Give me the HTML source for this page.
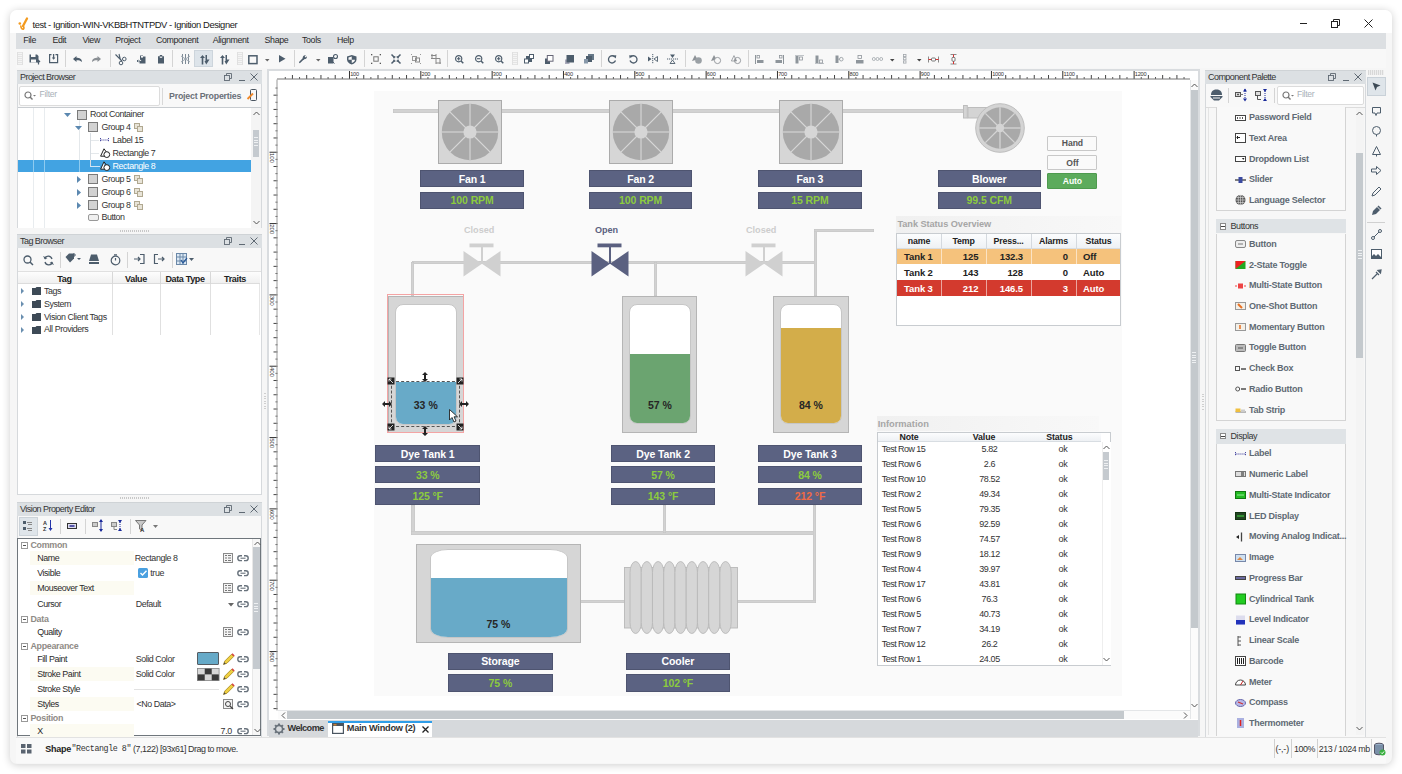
<!DOCTYPE html><html><head><meta charset="utf-8"><style>
*{margin:0;padding:0;box-sizing:border-box}
html,body{width:1402px;height:774px;overflow:hidden;background:#fff;font-family:"Liberation Sans",sans-serif;color:#222}
.a{position:absolute}
.t{position:absolute;white-space:nowrap;line-height:1}
svg{position:absolute;overflow:visible}
#win{position:absolute;left:10px;top:10px;width:1382px;height:754px;border-radius:7px;background:#f6f6f6;box-shadow:0 1px 8px rgba(0,0,0,0.20)}
</style></head><body>
<div id="win"></div>
<div class="a" style="left:10px;top:10px;width:1382px;height:23px;background:#fff;border-radius:7px 7px 0 0"></div>
<svg style="left:17px;top:16px" width="14" height="16" viewBox="0 0 14 16"><path d="M10 2.5 L6 10" stroke="#f39a1e" stroke-width="2.3" stroke-linecap="round"/><circle cx="2.8" cy="7.5" r="1.3" fill="#f39a1e"/><path d="M3.8 10 Q4.2 13.4 6.3 13.3 Q7.6 12 6.2 10" stroke="#f39a1e" stroke-width="1.6" fill="none" stroke-linecap="round"/></svg>
<div class="t" style="left:32.5px;top:19.71px;font-size:9.4px;letter-spacing:-0.42px;color:#1a1a1a">test - Ignition-WIN-VKBBHTNTPDV - Ignition Designer</div>
<div class="a" style="left:1300px;top:23px;width:7px;height:1px;background:#222"></div>
<svg style="left:1331px;top:19px" width="9" height="9" viewBox="0 0 9 9"><rect x="0.5" y="2.5" width="6" height="6" fill="none" stroke="#222"/><path d="M2.5 2.5 V0.5 H8.5 V6.5 H6.5" fill="none" stroke="#222"/></svg>
<svg style="left:1364px;top:19px" width="9" height="9" viewBox="0 0 9 9"><path d="M0.5 0.5 L8.5 8.5 M8.5 0.5 L0.5 8.5" stroke="#222" stroke-width="1"/></svg>
<div class="a" style="left:16px;top:33px;width:1370px;height:16px;background:#dcdfe2"></div>
<div class="t" style="left:23.2px;top:36.42px;font-size:8.8px;letter-spacing:-0.35px;color:#2a2a2a">File</div>
<div class="t" style="left:52.4px;top:36.42px;font-size:8.8px;letter-spacing:-0.35px;color:#2a2a2a">Edit</div>
<div class="t" style="left:82.4px;top:36.42px;font-size:8.8px;letter-spacing:-0.35px;color:#2a2a2a">View</div>
<div class="t" style="left:115.3px;top:36.42px;font-size:8.8px;letter-spacing:-0.35px;color:#2a2a2a">Project</div>
<div class="t" style="left:156px;top:36.42px;font-size:8.8px;letter-spacing:-0.35px;color:#2a2a2a">Component</div>
<div class="t" style="left:212.7px;top:36.42px;font-size:8.8px;letter-spacing:-0.35px;color:#2a2a2a">Alignment</div>
<div class="t" style="left:264.6px;top:36.42px;font-size:8.8px;letter-spacing:-0.35px;color:#2a2a2a">Shape</div>
<div class="t" style="left:302px;top:36.42px;font-size:8.8px;letter-spacing:-0.35px;color:#2a2a2a">Tools</div>
<div class="t" style="left:337px;top:36.42px;font-size:8.8px;letter-spacing:-0.35px;color:#2a2a2a">Help</div>
<div class="a" style="left:16px;top:49px;width:1370px;height:19px;background:#f8f8f8"></div>
<div class="a" style="left:17px;top:52px;width:6px;height:13px;background:repeating-linear-gradient(#e4e4e4 0 1px,#f4f4f4 1px 2px);border-left:1px solid #e0e0e0;border-right:1px solid #e0e0e0"></div>
<svg style="left:29px;top:54px" width="12" height="11" viewBox="0 0 12 11"><path d="M0.5 0.5 H2 V3 H6.5 V0.5 H8 L9.5 2 V8.5 H0.5 Z" fill="#4d5d6c"/><rect x="2" y="5.5" width="5" height="3" fill="#f8f8f8"/><path d="M9.5 10.5 V6.5 M8 8 L9.5 6.3 L11 8" stroke="#4d5d6c" stroke-width="1.2" fill="none"/></svg>
<svg style="left:49px;top:54px" width="10" height="10" viewBox="0 0 10 10"><path d="M2.5 0.6 H0.6 V8.6 H8.6 V0.6 H6.5" fill="none" stroke="#4d5d6c" stroke-width="1.2"/><path d="M4.6 0 V4.5" stroke="#4d5d6c" stroke-width="1.3"/><path d="M2.8 3.5 H6.4 L4.6 5.8 Z" fill="#4d5d6c"/></svg>
<div class="a" style="left:65.4px;top:50px;width:1px;height:17px;background:#d4d4d4"></div>
<svg style="left:72.6px;top:55.5px" width="10" height="7" viewBox="0 0 10 7"><path d="M0 3 L3.5 0 V1.8 C6.5 1.8 9 3 9 6 C7.5 4.5 6 4.2 3.5 4.2 V6 Z" fill="#4d5d6c"/></svg>
<svg style="left:92.2px;top:55.5px" width="10" height="7" viewBox="0 0 10 7"><path d="M9 3 L5.5 0 V1.8 C2.5 1.8 0 3 0 6 C1.5 4.5 3 4.2 5.5 4.2 V6 Z" fill="#8a8f94"/></svg>
<div class="a" style="left:109.5px;top:50px;width:1px;height:17px;background:#d4d4d4"></div>
<svg style="left:115px;top:53.5px" width="12" height="11" viewBox="0 0 12 11"><path d="M0.5 0.5 L7 7 M4 0 L5.5 6" stroke="#4d5d6c" stroke-width="1.1"/><circle cx="9.3" cy="5" r="1.8" fill="none" stroke="#4d5d6c"/><circle cx="6" cy="9" r="1.8" fill="none" stroke="#4d5d6c"/></svg>
<svg style="left:136.5px;top:54.5px" width="9" height="9" viewBox="0 0 9 9"><path d="M3 0.5 H6 V1.5 H8.5 V8.5 H2.5 V6 H4.5 L3 4.5 Z" fill="#4d5d6c"/><path d="M0 6 H3 M1.2 4.8 L0 6 L1.2 7.2" stroke="#4d5d6c" fill="none" stroke-width="0.9"/><rect x="4" y="1" width="2" height="1.6" fill="#f8f8f8"/></svg>
<svg style="left:158px;top:54.5px" width="6" height="8.5" viewBox="0 0 6 8.5"><path d="M0 1.2 H1.8 V0 H4.2 V1.2 H6 V8.5 H0 Z" fill="#4d5d6c"/><rect x="1.8" y="1.6" width="2.4" height="1.2" fill="#f8f8f8"/></svg>
<div class="a" style="left:172.4px;top:50px;width:1px;height:17px;background:#d4d4d4"></div>
<svg style="left:180.5px;top:54px" width="9" height="10" viewBox="0 0 9 10"><path d="M1.5 0 V10 M4.5 0 V10 M7.5 0 V10" stroke="#7d8a96" stroke-width="1"/><path d="M0 2 L9 8 M0 8 L9 2" stroke="#a0aab3" stroke-width="1"/></svg>
<div class="a" style="left:194.2px;top:49.5px;width:19.3px;height:17.5px;background:#dde4ea;border:1px solid #cdd5dc"></div>
<svg style="left:199.8px;top:54.5px" width="9.5" height="9.5" viewBox="0 0 9.5 9.5"><path d="M0 3 L2.5 0 L5 3 H3.3 V9.5 H1.7 V3 Z" fill="#4d5d6c"/><path d="M5.5 0 H7 V4.5 L9.5 4.5 L6.25 9.5 L4.5 6 H5.5 Z" fill="#4d5d6c"/></svg>
<svg style="left:219.8px;top:54.5px" width="9.5" height="9.5" viewBox="0 0 9.5 9.5"><path d="M0 3 L2.5 0 L5 3 H3.3 V9.5 H1.7 V3 Z" fill="#4d5d6c"/><path d="M5.5 0 H7 V4.5 L9.5 4.5 L6.25 9.5 L4.5 6 H5.5 Z" fill="#4d5d6c"/></svg>
<div class="a" style="left:237.4px;top:52px;width:6px;height:13px;background:repeating-linear-gradient(#e4e4e4 0 1px,#f4f4f4 1px 2px);border-left:1px solid #e0e0e0;border-right:1px solid #e0e0e0"></div>
<svg style="left:247.5px;top:54.5px" width="10" height="9.5" viewBox="0 0 10 9.5"><rect x="0.8" y="0.8" width="8.2" height="7.8" fill="none" stroke="#4d5d6c" stroke-width="1.5"/></svg>
<svg style="left:265px;top:58.5px" width="4.5" height="2.5" viewBox="0 0 4.5 2.5"><path d="M0 0 H4.5 L2.25 2.5 Z" fill="#666"/></svg>
<svg style="left:278.75px;top:55.3px" width="6.5" height="7.4" viewBox="0 0 6.5 7.4"><path d="M0 0 L6.5 3.7 L0 7.4 Z" fill="#4d5d6c"/></svg>
<div class="a" style="left:293.8px;top:50px;width:1px;height:17px;background:#d4d4d4"></div>
<svg style="left:299px;top:55px" width="8.5" height="8" viewBox="0 0 8.5 8"><path d="M0.8 7.3 L4.5 3.6" stroke="#4d5d6c" stroke-width="1.6" stroke-linecap="round"/><path d="M3.8 3.6 C3.3 1.5 4.8 0 6.8 0.4 L5.7 1.6 L6.5 2.4 L7.8 1.3 C8.3 3.3 6.6 4.6 4.6 4.2 Z" fill="#4d5d6c"/></svg>
<svg style="left:315.8px;top:58.5px" width="4.5" height="2.5" viewBox="0 0 4.5 2.5"><path d="M0 0 H4.5 L2.25 2.5 Z" fill="#666"/></svg>
<svg style="left:328px;top:53.5px" width="10" height="9.5" viewBox="0 0 10 9.5"><rect x="0" y="3" width="5.5" height="6.5" fill="#4d5d6c"/><path d="M4 7 L6.5 9.5" stroke="#4d5d6c"/><circle cx="7.5" cy="2.5" r="2" fill="none" stroke="#4d5d6c" stroke-width="1.1"/></svg>
<svg style="left:347.3px;top:54.5px" width="9.5" height="9.5" viewBox="0 0 9.5 9.5"><path d="M4.75 0 L9.5 1.5 V4.5 C9.5 7 7.5 8.5 4.75 9.5 C2 8.5 0 7 0 4.5 V1.5 Z" fill="#4d5d6c"/><path d="M4.75 1.5 V4.75 H8 C7.8 6.5 6.5 7.5 4.75 8 Z M1.5 4.75 H4.75 V1.5 L1.5 2.5 Z" fill="#f8f8f8"/></svg>
<div class="a" style="left:363.8px;top:50px;width:1px;height:17px;background:#d4d4d4"></div>
<svg style="left:370.5px;top:54px" width="10" height="10" viewBox="0 0 10 10"><g fill="#555"><rect x="0" y="0" width="1.3" height="1.3"/><rect x="8.7" y="0" width="1.3" height="1.3"/><rect x="0" y="8.7" width="1.3" height="1.3"/><rect x="8.7" y="8.7" width="1.3" height="1.3"/></g><rect x="2.8" y="2.8" width="4.4" height="4.4" fill="none" stroke="#777"/></svg>
<svg style="left:390.8px;top:54px" width="10" height="10" viewBox="0 0 10 10"><path d="M0.5 0.5 L3.5 3.5 M9.5 0.5 L6.5 3.5 M0.5 9.5 L3.5 6.5 M9.5 9.5 L6.5 6.5" stroke="#4d5d6c" stroke-width="1.5"/><path d="M2 3.8 H3.8 V2 M8 3.8 H6.2 V2 M2 6.2 H3.8 V8 M8 6.2 H6.2 V8" stroke="#4d5d6c" fill="none"/></svg>
<svg style="left:411px;top:54px" width="10" height="10" viewBox="0 0 10 10"><g fill="#999"><rect x="0" y="0" width="1" height="1"/><rect x="9" y="0" width="1" height="1"/><rect x="0" y="9" width="1" height="1"/><rect x="9" y="9" width="1" height="1"/></g><rect x="1.5" y="2.5" width="4" height="4" fill="none" stroke="#999"/><rect x="4.5" y="4" width="4" height="4" fill="none" stroke="#888"/></svg>
<svg style="left:430.6px;top:54px" width="10" height="10" viewBox="0 0 10 10"><path d="M1 0 V5 M0 1.5 H5 M5 0 V5 M0 4.5 H9 M5 5 V10 M9 4.5 V10 M5 9 H10" stroke="#888" fill="none"/></svg>
<div class="a" style="left:447.3px;top:50px;width:1px;height:17px;background:#d4d4d4"></div>
<svg style="left:455px;top:55.2px" width="8.5" height="8.5" viewBox="0 0 8.5 8.5"><circle cx="3.7" cy="3.7" r="3.1" fill="none" stroke="#4d5d6c" stroke-width="1.2"/><path d="M6 6 L8.3 8.3" stroke="#4d5d6c" stroke-width="1.5"/><path d="M2 3.7 H5.4 M3.7 2 V5.4" stroke="#4d5d6c" stroke-width="1.1"/></svg>
<svg style="left:475.4px;top:55.2px" width="8.5" height="8.5" viewBox="0 0 8.5 8.5"><circle cx="3.7" cy="3.7" r="3.1" fill="none" stroke="#4d5d6c" stroke-width="1.2"/><path d="M6 6 L8.3 8.3" stroke="#4d5d6c" stroke-width="1.5"/><path d="M2 3.7 H5.4" stroke="#4d5d6c" stroke-width="1.1"/></svg>
<svg style="left:495.1px;top:55.2px" width="8.5" height="8.5" viewBox="0 0 8.5 8.5"><circle cx="3.7" cy="3.7" r="3.1" fill="none" stroke="#4d5d6c" stroke-width="1.2"/><path d="M6 6 L8.3 8.3" stroke="#4d5d6c" stroke-width="1.5"/><path d="M2 3.7 H5.4 M3.7 2 V5.4" stroke="#4d5d6c" stroke-width="1.1"/></svg>
<div class="a" style="left:512.2px;top:52px;width:6px;height:13px;background:repeating-linear-gradient(#e4e4e4 0 1px,#f4f4f4 1px 2px);border-left:1px solid #e0e0e0;border-right:1px solid #e0e0e0"></div>
<svg style="left:524.2px;top:54.1px" width="10" height="9.5" viewBox="0 0 10 9.5"><rect x="2" y="2" width="6" height="6" fill="#4d5d6c"/><rect x="5.5" y="0.5" width="4" height="4" fill="#fff" stroke="#4d5d6c"/><rect x="0.5" y="5" width="4" height="4" fill="#fff" stroke="#4d5d6c"/></svg>
<svg style="left:544.8px;top:54.5px" width="8.5" height="9" viewBox="0 0 8.5 9"><rect x="0" y="3.5" width="5" height="5.5" fill="#4d5d6c"/><rect x="2.3" y="0.5" width="5.7" height="5.7" fill="#fff" stroke="#667"/></svg>
<svg style="left:564.5px;top:54.5px" width="9" height="9" viewBox="0 0 9 9"><rect x="0" y="4.5" width="4.5" height="4.5" fill="#aab"/><rect x="1.5" y="0" width="7.5" height="7.5" fill="#4d5d6c"/></svg>
<svg style="left:584.2px;top:54.1px" width="10" height="9.5" viewBox="0 0 10 9.5"><rect x="4" y="0" width="6" height="6" fill="#667888"/><rect x="2" y="2" width="6" height="6" fill="#4d5d6c"/><rect x="0" y="5" width="4" height="4.5" fill="#8899aa"/></svg>
<div class="a" style="left:600.7px;top:50px;width:1px;height:17px;background:#d4d4d4"></div>
<svg style="left:608px;top:55px" width="8.5" height="8.5" viewBox="0 0 8.5 8.5"><path d="M6.8 2 A3.6 3.6 0 1 0 7.5 5.5" fill="none" stroke="#4d5d6c" stroke-width="1.3"/><path d="M5 0.5 L8.3 0.3 L7.8 3.5 Z" fill="#4d5d6c"/></svg>
<svg style="left:629px;top:55px" width="8.5" height="8.5" viewBox="0 0 8.5 8.5"><path d="M1.7 2 A3.6 3.6 0 1 1 1 5.5" fill="none" stroke="#4d5d6c" stroke-width="1.3"/><path d="M3.5 0.5 L0.2 0.3 L0.7 3.5 Z" fill="#4d5d6c"/></svg>
<svg style="left:647.8px;top:54.1px" width="9.5" height="10" viewBox="0 0 9.5 10"><path d="M0 2.5 L3.5 5 L0 7.5 Z" fill="#4d5d6c"/><path d="M9.5 2.5 L6 5 L9.5 7.5 Z" fill="none" stroke="#4d5d6c" stroke-width="0.9"/><path d="M4.75 0 V10" stroke="#4d5d6c" stroke-dasharray="1.2 0.8"/></svg>
<svg style="left:667px;top:54.1px" width="11" height="10" viewBox="0 0 11 10"><path d="M3 0.5 H8 L5.5 4 Z" fill="#4d5d6c"/><path d="M3 9.5 H8 L5.5 6 Z" fill="none" stroke="#4d5d6c" stroke-width="0.9"/><path d="M0 5 H11" stroke="#4d5d6c" stroke-dasharray="1.2 0.8"/></svg>
<div class="a" style="left:684.6px;top:50px;width:1px;height:17px;background:#d4d4d4"></div>
<svg style="left:691.5px;top:54.6px" width="10" height="9" viewBox="0 0 10 9"><path d="M0 6 L3 0 L5.5 4.5 Z" fill="#8d9297"/><circle cx="6.5" cy="5.5" r="3.3" fill="#9aa0a5"/></svg>
<svg style="left:711px;top:54.6px" width="10" height="9" viewBox="0 0 10 9"><path d="M0 6 L3 0 L5.5 4.5 Z" fill="#8d9297"/><circle cx="6.5" cy="5.5" r="3.1" fill="#f8f8f8" stroke="#8d9297" stroke-width="0.9"/></svg>
<svg style="left:731.3px;top:54.6px" width="10" height="9" viewBox="0 0 10 9"><path d="M0.4 6 L3 0.6 L5.5 6 Z" fill="none" stroke="#8d9297" stroke-width="0.8"/><circle cx="6.5" cy="5.5" r="3.1" fill="none" stroke="#8d9297" stroke-width="0.9"/><path d="M3 6 L5.5 6 L4.5 3.5 Z" fill="#8d9297"/></svg>
<div class="a" style="left:747.5px;top:50px;width:1px;height:17px;background:#d4d4d4"></div>
<svg style="left:755.2px;top:54.5px" width="9" height="9" viewBox="0 0 9 9"><path d="M0.5 0 V9" stroke="#8e959b"/><rect x="2" y="0.5" width="2.5" height="2.5" fill="none" stroke="#8e959b" stroke-width="0.8"/><rect x="2" y="5" width="6.5" height="3" fill="#8e959b"/></svg>
<svg style="left:774.9px;top:54.5px" width="9" height="9" viewBox="0 0 9 9"><path d="M8.5 0 V9" stroke="#8e959b"/><rect x="4.5" y="0.5" width="2.5" height="2.5" fill="none" stroke="#8e959b" stroke-width="0.8"/><rect x="0.5" y="5" width="6.5" height="3" fill="#8e959b"/></svg>
<svg style="left:795px;top:54.5px" width="9" height="9" viewBox="0 0 9 9"><path d="M0 0.5 H9" stroke="#c0c4c8"/><rect x="0.5" y="1" width="3" height="7.5" fill="#8e959b"/><rect x="4.5" y="2" width="3" height="3" fill="none" stroke="#8e959b" stroke-width="0.8"/></svg>
<svg style="left:815px;top:54.5px" width="9" height="9" viewBox="0 0 9 9"><path d="M0 8.5 H9" stroke="#c0c4c8"/><rect x="0.5" y="0.5" width="3" height="7.5" fill="#8e959b"/><rect x="4.5" y="5" width="3" height="3" fill="none" stroke="#8e959b" stroke-width="0.8"/></svg>
<svg style="left:834.8px;top:54.5px" width="9" height="9" viewBox="0 0 9 9"><rect x="0.5" y="0.5" width="3" height="7.5" fill="#8e959b"/><circle cx="6.3" cy="4.2" r="1.8" fill="none" stroke="#8e959b" stroke-width="0.8"/><path d="M3.5 4.2 H4.5" stroke="#8e959b"/></svg>
<svg style="left:855.6px;top:54.5px" width="8" height="9" viewBox="0 0 8 9"><rect x="2" y="0.5" width="3.5" height="3" fill="none" stroke="#8e959b" stroke-width="0.8"/><rect x="0" y="5" width="7.5" height="3.5" fill="#8e959b"/></svg>
<svg style="left:871.7px;top:57px" width="11" height="4" viewBox="0 0 11 4"><circle cx="1.8" cy="2" r="1.5" fill="none" stroke="#a0a6ab" stroke-width="0.8"/><circle cx="5.5" cy="2" r="1.5" fill="none" stroke="#a0a6ab" stroke-width="0.8"/><circle cx="9.2" cy="2" r="1.5" fill="none" stroke="#a0a6ab" stroke-width="0.8"/></svg>
<svg style="left:889.5px;top:58.5px" width="4.5" height="2.5" viewBox="0 0 4.5 2.5"><path d="M0 0 H4.5 L2.25 2.5 Z" fill="#444"/></svg>
<svg style="left:902.7px;top:54.3px" width="3.5" height="9.5" viewBox="0 0 3.5 9.5"><rect x="0.4" y="0.4" width="2.6" height="2.2" fill="none" stroke="#a0a6ab" stroke-width="0.8"/><rect x="0.4" y="3.6" width="2.6" height="2.2" fill="none" stroke="#a0a6ab" stroke-width="0.8"/><rect x="0.4" y="6.9" width="2.6" height="2.2" fill="none" stroke="#a0a6ab" stroke-width="0.8"/></svg>
<svg style="left:916.5px;top:58.5px" width="4.5" height="2.5" viewBox="0 0 4.5 2.5"><path d="M0 0 H4.5 L2.25 2.5 Z" fill="#444"/></svg>
<svg style="left:928.4px;top:55.5px" width="11" height="7" viewBox="0 0 11 7"><path d="M0.5 0.5 V6.5 M10.5 0.5 V6.5" stroke="#8a8a8a"/><path d="M0.5 3.5 H10.5" stroke="#e03030"/><rect x="3.5" y="2" width="4" height="3" rx="1" fill="#fff" stroke="#555" stroke-width="0.8"/></svg>
<svg style="left:950px;top:53.8px" width="7" height="10.5" viewBox="0 0 7 10.5"><path d="M0.5 0.5 H6.5 M0.5 10 H6.5" stroke="#8a8a8a"/><path d="M3.5 0.5 V10" stroke="#e03030"/><rect x="2" y="3.3" width="3" height="4" rx="1" fill="#fff" stroke="#555" stroke-width="0.8"/></svg>
<div class="a" style="left:16px;top:68px;width:1370px;height:669px;background:#f6f6f6"></div>
<div class="a" style="left:17px;top:70px;width:245px;height:14px;background:#dce0e3;border-top:1px solid #cfd3d6"></div>
<div class="t" style="left:20px;top:72.62px;font-size:9px;letter-spacing:-0.55px;color:#333">Project Browser</div>
<svg style="left:224px;top:73px" width="8" height="8" viewBox="0 0 8 8"><rect x="0.5" y="2.5" width="5" height="5" fill="none" stroke="#5f6973" stroke-width="0.9"/><path d="M2.5 2.5 V0.5 H7.5 V5.5 H5.5" fill="none" stroke="#5f6973" stroke-width="0.9"/></svg>
<div class="a" style="left:239px;top:80px;width:6px;height:1.3px;background:#5f6973"></div>
<svg style="left:250px;top:73px" width="8" height="8" viewBox="0 0 8 8"><path d="M0.5 0.5 L7.5 7.5 M7.5 0.5 L0.5 7.5" stroke="#5f6973" stroke-width="1"/></svg>
<div class="a" style="left:17px;top:84px;width:245px;height:144px;background:#f8f8f8;border-left:1px solid #d6d9dc;border-right:1px solid #d6d9dc"></div>
<div class="a" style="left:19px;top:86px;width:140.5px;height:20px;background:#fff;border:1px solid #dcdcdc;border-radius:2px"></div>
<svg style="left:24px;top:91px" width="12" height="10" viewBox="0 0 12 10"><circle cx="4" cy="4" r="3" fill="none" stroke="#777" stroke-width="1.2"/><path d="M6 6 L8.5 8.5" stroke="#777" stroke-width="1.4"/><path d="M9 4 H12 L10.5 5.5 Z" fill="#777"/></svg>
<div class="t" style="left:39.5px;top:90.03px;font-size:8.6px;color:#a8b0b8;letter-spacing:-0.3px">Filter</div>
<div class="a" style="left:162px;top:88px;width:1px;height:17px;background:#d8d8d8"></div>
<div class="t" style="left:169px;top:91.62px;font-size:8.8px;font-weight:bold;color:#6a7078;letter-spacing:-0.2px">Project Properties</div>
<svg style="left:247px;top:89px" width="10" height="12" viewBox="0 0 10 12"><rect x="3.5" y="0.5" width="6" height="11" rx="1" fill="none" stroke="#4a5560"/><path d="M0.5 10 L6 4.5" stroke="#f0892a" stroke-width="1.8"/></svg>
<div class="a" style="left:18px;top:107px;width:243px;height:121px;background:#fff;border-top:1px solid #c8ccd0;overflow:hidden"></div>
<div class="a" style="left:32.5px;top:108px;width:1px;height:120px;background:#e8ecef"></div>
<div class="a" style="left:44.4px;top:108px;width:1px;height:120px;background:#e8ecef"></div>
<div class="a" style="left:78.5px;top:120px;width:1px;height:50px;background:#e4e8eb"></div>
<div class="a" style="left:18px;top:159.5px;width:233px;height:12.5px;background:#42a3e2"></div>
<div class="a" style="left:32.5px;top:159.5px;width:1px;height:12.5px;background:#8ecbf0"></div>
<div class="a" style="left:44.4px;top:159.5px;width:1px;height:12.5px;background:#8ecbf0"></div>
<div class="a" style="left:78.5px;top:159.5px;width:1px;height:12.5px;background:#8ecbf0"></div>
<svg style="left:63.8px;top:112.9px" width="7" height="4" viewBox="0 0 7 4"><path d="M0 0 H7 L3.5 4 Z" fill="#5b88b0"/></svg>
<div class="a" style="left:77px;top:109.60000000000001px;width:10px;height:10px;background:#d2d2d2;border:1px solid #7a7a7a"></div>
<div class="t" style="left:89.9px;top:110.07px;font-size:8.9px;letter-spacing:-0.42px;color:#333">Root Container</div>
<svg style="left:75.3px;top:125.5px" width="7" height="4" viewBox="0 0 7 4"><path d="M0 0 H7 L3.5 4 Z" fill="#5b88b0"/></svg>
<div class="a" style="left:88.3px;top:122.2px;width:10px;height:10px;background:#d2d2d2;border:1px solid #7a7a7a"></div>
<svg style="left:133.5px;top:123.0px" width="9" height="9" viewBox="0 0 9 9"><rect x="0.5" y="0.5" width="5" height="5" fill="#e8e4d8" stroke="#b0a890"/><rect x="3.5" y="3.5" width="5" height="5" fill="#e8e4d8" stroke="#b0a890"/></svg>
<div class="t" style="left:101.5px;top:122.67px;font-size:8.9px;letter-spacing:-0.42px;color:#333">Group 4</div>
<svg style="left:100.2px;top:138.2px" width="9" height="4" viewBox="0 0 9 4"><path d="M0.5 0 V4 M8.5 0 V4 M0.5 2 H8.5" stroke="#4848a0" stroke-dasharray="1.2 0.8"/></svg>
<div class="t" style="left:112.6px;top:135.87px;font-size:8.9px;letter-spacing:-0.42px;color:#333">Label 15</div>
<svg style="left:100.2px;top:148.4px" width="11" height="10" viewBox="0 0 11 10"><path d="M4 0.8 L0.6 8.2 H5 M4 0.8 L6.5 4.2" fill="#fff" stroke="#222" stroke-width="1"/><circle cx="6.8" cy="6.6" r="2.9" fill="#fff" stroke="#222"/></svg>
<div class="t" style="left:112.6px;top:149.07px;font-size:8.9px;letter-spacing:-0.42px;color:#333">Rectangle 7</div>
<svg style="left:100.2px;top:161.0px" width="11" height="10" viewBox="0 0 11 10"><path d="M4 0.8 L0.6 8.2 H5 M4 0.8 L6.5 4.2" fill="#fff" stroke="#222" stroke-width="1"/><circle cx="6.8" cy="6.6" r="2.9" fill="#fff" stroke="#222"/></svg>
<div class="t" style="left:112.6px;top:161.67px;font-size:8.9px;letter-spacing:-0.42px;color:#fff">Rectangle 8</div>
<svg style="left:77.3px;top:175.5px" width="4" height="7" viewBox="0 0 4 7"><path d="M0 0 V7 L4 3.5 Z" fill="#5b88b0"/></svg>
<div class="a" style="left:88.3px;top:174.2px;width:10px;height:10px;background:#d2d2d2;border:1px solid #7a7a7a"></div>
<svg style="left:133.5px;top:175.0px" width="9" height="9" viewBox="0 0 9 9"><rect x="0.5" y="0.5" width="5" height="5" fill="#e8e4d8" stroke="#b0a890"/><rect x="3.5" y="3.5" width="5" height="5" fill="#e8e4d8" stroke="#b0a890"/></svg>
<div class="t" style="left:101.5px;top:174.67px;font-size:8.9px;letter-spacing:-0.42px;color:#333">Group 5</div>
<svg style="left:77.3px;top:188.5px" width="4" height="7" viewBox="0 0 4 7"><path d="M0 0 V7 L4 3.5 Z" fill="#5b88b0"/></svg>
<div class="a" style="left:88.3px;top:187.2px;width:10px;height:10px;background:#d2d2d2;border:1px solid #7a7a7a"></div>
<svg style="left:133.5px;top:188.0px" width="9" height="9" viewBox="0 0 9 9"><rect x="0.5" y="0.5" width="5" height="5" fill="#e8e4d8" stroke="#b0a890"/><rect x="3.5" y="3.5" width="5" height="5" fill="#e8e4d8" stroke="#b0a890"/></svg>
<div class="t" style="left:101.5px;top:187.67px;font-size:8.9px;letter-spacing:-0.42px;color:#333">Group 6</div>
<svg style="left:77.3px;top:201.5px" width="4" height="7" viewBox="0 0 4 7"><path d="M0 0 V7 L4 3.5 Z" fill="#5b88b0"/></svg>
<div class="a" style="left:88.3px;top:200.2px;width:10px;height:10px;background:#d2d2d2;border:1px solid #7a7a7a"></div>
<svg style="left:133.5px;top:201.0px" width="9" height="9" viewBox="0 0 9 9"><rect x="0.5" y="0.5" width="5" height="5" fill="#e8e4d8" stroke="#b0a890"/><rect x="3.5" y="3.5" width="5" height="5" fill="#e8e4d8" stroke="#b0a890"/></svg>
<div class="t" style="left:101.5px;top:200.67px;font-size:8.9px;letter-spacing:-0.42px;color:#333">Group 8</div>
<div class="a" style="left:88.3px;top:214.0px;width:11px;height:7px;background:#f0f0f0;border:1px solid #999;border-radius:2px"></div>
<div class="t" style="left:101.5px;top:213.17px;font-size:8.9px;letter-spacing:-0.42px;color:#333">Button</div>
<div class="a" style="left:90px;top:140.2px;width:9px;height:1px;background:#e4e8eb"></div>
<div class="a" style="left:90px;top:153.4px;width:9px;height:1px;background:#e4e8eb"></div>
<div class="a" style="left:89.5px;top:133px;width:1px;height:33px;background:#d8dde2"></div>
<div class="a" style="left:89.5px;top:166px;width:10px;height:1px;background:#cfe6f7"></div>
<div class="a" style="left:251px;top:108px;width:10px;height:120px;background:#f4f4f4"></div>
<svg style="left:252.5px;top:111px" width="7" height="5" viewBox="0 0 7 5"><path d="M0.5 4 L3.5 1 L6.5 4" fill="none" stroke="#555"/></svg>
<div class="a" style="left:252.5px;top:130px;width:6px;height:27px;background:#c5cacf"></div>
<svg style="left:252.5px;top:220px" width="7" height="5" viewBox="0 0 7 5"><path d="M0.5 1 L3.5 4 L6.5 1" fill="none" stroke="#555"/></svg>
<div class="a" style="left:120px;top:230px;width:30px;height:2px;background:repeating-linear-gradient(90deg,#c8c8c8 0 1px,transparent 1px 2px)"></div>
<div class="a" style="left:17px;top:234px;width:245px;height:14px;background:#dce0e3;border-top:1px solid #cfd3d6"></div>
<div class="t" style="left:20px;top:236.62px;font-size:9px;letter-spacing:-0.55px;color:#333">Tag Browser</div>
<svg style="left:224px;top:237px" width="8" height="8" viewBox="0 0 8 8"><rect x="0.5" y="2.5" width="5" height="5" fill="none" stroke="#5f6973" stroke-width="0.9"/><path d="M2.5 2.5 V0.5 H7.5 V5.5 H5.5" fill="none" stroke="#5f6973" stroke-width="0.9"/></svg>
<div class="a" style="left:239px;top:244px;width:6px;height:1.3px;background:#5f6973"></div>
<svg style="left:250px;top:237px" width="8" height="8" viewBox="0 0 8 8"><path d="M0.5 0.5 L7.5 7.5 M7.5 0.5 L0.5 7.5" stroke="#5f6973" stroke-width="1"/></svg>
<div class="a" style="left:17px;top:248px;width:245px;height:247px;background:#f8f8f8;border-left:1px solid #d6d9dc;border-right:1px solid #d6d9dc;border-bottom:1px solid #d6d9dc"></div>
<svg style="left:23px;top:255px" width="11" height="11" viewBox="0 0 11 11"><circle cx="4.5" cy="4.5" r="3.5" fill="none" stroke="#4d5d6c" stroke-width="1.3"/><path d="M7 7 L10 10" stroke="#4d5d6c" stroke-width="1.5"/></svg>
<svg style="left:43px;top:255px" width="11" height="11" viewBox="0 0 11 11"><path d="M9 4 A4 4 0 0 0 1.5 3.5 M2 7 A4 4 0 0 0 9.5 7.5" fill="none" stroke="#4d5d6c" stroke-width="1.3"/><path d="M0 1 L2 4.5 L4.5 3 Z M11 10 L9 6.5 L6.5 8 Z" fill="#4d5d6c"/></svg>
<div class="a" style="left:59.5px;top:252px;width:1px;height:16px;background:#d4d4d4"></div>
<svg style="left:65px;top:253px" width="16" height="12" viewBox="0 0 16 12"><path d="M0.5 4 L4 0.5 H9 V5.5 L5 9.5 Z" fill="#4d5d6c"/><path d="M9 0 V4 M7 2 H11" stroke="#4d5d6c"/><path d="M12 5 H16 L14 7 Z" fill="#4d5d6c"/></svg>
<svg style="left:89px;top:254px" width="11" height="10" viewBox="0 0 11 10"><path d="M2 0.5 H8 L10 7 H0 Z" fill="#4d5d6c"/><rect x="0" y="8" width="10" height="2" fill="#4d5d6c"/></svg>
<svg style="left:109.5px;top:254px" width="11" height="12" viewBox="0 0 11 12"><circle cx="5.5" cy="6.5" r="4.3" fill="none" stroke="#4d5d6c" stroke-width="1.2"/><path d="M5.5 6.5 V4 M4 0.8 H7" stroke="#4d5d6c" stroke-width="1.2"/></svg>
<div class="a" style="left:127px;top:252px;width:1px;height:16px;background:#d4d4d4"></div>
<svg style="left:134px;top:254px" width="11" height="10" viewBox="0 0 11 10"><path d="M0 5 H6 M4 3 L6 5 L4 7" fill="none" stroke="#4d5d6c" stroke-width="1.2"/><path d="M6 0.5 H10 V9.5 H6" fill="none" stroke="#4d5d6c" stroke-width="1.2"/></svg>
<svg style="left:154px;top:254px" width="11" height="10" viewBox="0 0 11 10"><path d="M4 0.5 H0.5 V9.5 H4" fill="none" stroke="#4d5d6c" stroke-width="1.2"/><path d="M4 5 H10 M8 3 L10 5 L8 7" fill="none" stroke="#4d5d6c" stroke-width="1.2"/></svg>
<div class="a" style="left:172px;top:252px;width:1px;height:16px;background:#d4d4d4"></div>
<svg style="left:176px;top:253px" width="11" height="13" viewBox="0 0 11 13"><rect x="0.5" y="0.5" width="10" height="11" fill="#dbe8f4" stroke="#6b88a8"/><path d="M0.5 4 H10.5 M0.5 8 H10.5 M4 0.5 V11.5 M7 0.5 V11.5" stroke="#6b88a8"/><path d="M5 7 L7 10 L11 5" fill="none" stroke="#2a5a9a" stroke-width="1.3"/></svg>
<svg style="left:189px;top:258px" width="5" height="3" viewBox="0 0 5 3"><path d="M0 0 H5 L2.5 3 Z" fill="#4d5d6c"/></svg>
<div class="a" style="left:18px;top:271px;width:243px;height:223px;background:#fff;border-top:1px solid #e0e0e0"></div>
<div class="a" style="left:18px;top:272px;width:242px;height:11.5px;background:linear-gradient(#fdfdfd,#f0f0f0);border-bottom:1px solid #dcdcdc"></div>
<div class="a" style="left:112px;top:272px;width:1px;height:11.5px;background:#d8d8d8"></div>
<div class="a" style="left:160px;top:272px;width:1px;height:11.5px;background:#d8d8d8"></div>
<div class="a" style="left:210px;top:272px;width:1px;height:11.5px;background:#d8d8d8"></div>
<div class="a" style="left:112px;top:284px;width:1px;height:51px;background:#e0e0e0"></div>
<div class="a" style="left:160px;top:284px;width:1px;height:51px;background:#e0e0e0"></div>
<div class="a" style="left:210px;top:284px;width:1px;height:51px;background:#e0e0e0"></div>
<div class="t" style="left:-35.50px;width:200px;text-align:center;top:274.62px;font-size:9px;font-weight:bold;letter-spacing:-0.35px;color:#222">Tag</div>
<div class="t" style="left:36.00px;width:200px;text-align:center;top:274.62px;font-size:9px;font-weight:bold;letter-spacing:-0.35px;color:#222">Value</div>
<div class="t" style="left:85.00px;width:200px;text-align:center;top:274.62px;font-size:9px;font-weight:bold;letter-spacing:-0.35px;color:#222">Data Type</div>
<div class="t" style="left:135.00px;width:200px;text-align:center;top:274.62px;font-size:9px;font-weight:bold;letter-spacing:-0.35px;color:#222">Traits</div>
<div class="a" style="left:259px;top:284px;width:1px;height:51px;background:#e6e6e6"></div>
<svg style="left:20.5px;top:288px" width="3" height="6" viewBox="0 0 3 6"><path d="M0 0 V6 L3 3 Z" fill="#6a8fb0"/></svg>
<svg style="left:32px;top:287px" width="9" height="8" viewBox="0 0 9 8"><path d="M0 1 H3.5 L4.5 0 H9 V8 H0 Z" fill="#3d4a56"/></svg>
<div class="t" style="left:44px;top:286.67px;font-size:8.9px;letter-spacing:-0.42px;color:#333">Tags</div>
<svg style="left:20.5px;top:301px" width="3" height="6" viewBox="0 0 3 6"><path d="M0 0 V6 L3 3 Z" fill="#6a8fb0"/></svg>
<svg style="left:32px;top:300px" width="9" height="8" viewBox="0 0 9 8"><path d="M0 1 H3.5 L4.5 0 H9 V8 H0 Z" fill="#3d4a56"/></svg>
<div class="t" style="left:44px;top:299.67px;font-size:8.9px;letter-spacing:-0.42px;color:#333">System</div>
<svg style="left:20.5px;top:314px" width="3" height="6" viewBox="0 0 3 6"><path d="M0 0 V6 L3 3 Z" fill="#6a8fb0"/></svg>
<svg style="left:32px;top:313px" width="9" height="8" viewBox="0 0 9 8"><path d="M0 1 H3.5 L4.5 0 H9 V8 H0 Z" fill="#3d4a56"/></svg>
<div class="t" style="left:44px;top:312.67px;font-size:8.9px;letter-spacing:-0.42px;color:#333">Vision Client Tags</div>
<svg style="left:20.5px;top:326.5px" width="3" height="6" viewBox="0 0 3 6"><path d="M0 0 V6 L3 3 Z" fill="#6a8fb0"/></svg>
<svg style="left:32px;top:325.5px" width="9" height="8" viewBox="0 0 9 8"><path d="M0 1 H3.5 L4.5 0 H9 V8 H0 Z" fill="#3d4a56"/></svg>
<div class="t" style="left:44px;top:325.17px;font-size:8.9px;letter-spacing:-0.42px;color:#333">All Providers</div>
<div class="a" style="left:120px;top:497px;width:30px;height:2px;background:repeating-linear-gradient(90deg,#c8c8c8 0 1px,transparent 1px 2px)"></div>
<div class="a" style="left:17px;top:502px;width:245px;height:14px;background:#dce0e3;border-top:1px solid #cfd3d6"></div>
<div class="t" style="left:20px;top:504.62px;font-size:9px;letter-spacing:-0.55px;color:#333">Vision Property Editor</div>
<svg style="left:224px;top:505px" width="8" height="8" viewBox="0 0 8 8"><rect x="0.5" y="2.5" width="5" height="5" fill="none" stroke="#5f6973" stroke-width="0.9"/><path d="M2.5 2.5 V0.5 H7.5 V5.5 H5.5" fill="none" stroke="#5f6973" stroke-width="0.9"/></svg>
<div class="a" style="left:239px;top:512px;width:6px;height:1.3px;background:#5f6973"></div>
<svg style="left:250px;top:505px" width="8" height="8" viewBox="0 0 8 8"><path d="M0.5 0.5 L7.5 7.5 M7.5 0.5 L0.5 7.5" stroke="#5f6973" stroke-width="1"/></svg>
<div class="a" style="left:17px;top:516px;width:245px;height:221px;background:#f8f8f8;border-left:1px solid #d6d9dc;border-right:1px solid #d6d9dc"></div>
<div class="a" style="left:18.5px;top:516.5px;width:19px;height:19px;background:#dfe5ea;border:1px solid #ccd3d9"></div>
<svg style="left:23px;top:521px" width="10" height="10" viewBox="0 0 10 10"><rect x="0" y="0" width="3" height="3" fill="#4d5d6c"/><rect x="0" y="6" width="3" height="3" fill="#4d5d6c"/><path d="M4 1.5 H9 M4 7.5 H9 M5 3.5 H9 M5 9.5 H9" stroke="#888"/></svg>
<svg style="left:43px;top:520px" width="10" height="12" viewBox="0 0 10 12"><text x="0" y="5" font-size="5.5" font-weight="bold" fill="#333" font-family="Liberation Sans">A</text><text x="0" y="11" font-size="5.5" font-weight="bold" fill="#333" font-family="Liberation Sans">Z</text><path d="M7.5 0 V9" stroke="#2233aa"/><path d="M5.5 8 L7.5 11 L9.5 8 Z" fill="#2233aa"/></svg>
<div class="a" style="left:59.5px;top:519px;width:1px;height:15px;background:#d4d4d4"></div>
<svg style="left:67px;top:523px" width="10" height="6" viewBox="0 0 10 6"><rect x="0.5" y="0.5" width="9" height="5" fill="#dde" stroke="#333"/><rect x="2.5" y="2" width="5" height="2" fill="#55a"/></svg>
<div class="a" style="left:84.5px;top:519px;width:1px;height:15px;background:#d4d4d4"></div>
<svg style="left:92px;top:519px" width="12" height="13" viewBox="0 0 12 13"><rect x="0.5" y="3.5" width="5" height="4" fill="#ccc" stroke="#888"/><path d="M9 1 V12" stroke="#1a2a9a"/><path d="M7 3 L9 0 L11 3 Z M7 10 L9 13 L11 10 Z" fill="#1a2a9a"/></svg>
<svg style="left:111px;top:519px" width="12" height="13" viewBox="0 0 12 13"><rect x="0.5" y="3.5" width="5" height="4" fill="#ccc" stroke="#888"/><path d="M3 7.5 V10.5 H6" fill="none" stroke="#888"/><path d="M9 1 V12" stroke="#1a2a9a" stroke-dasharray="1 1"/><path d="M7 1 L9 4 L11 1 Z M7 12 L9 9 L11 12 Z" fill="#1a2a9a"/></svg>
<div class="a" style="left:129.5px;top:519px;width:1px;height:15px;background:#d4d4d4"></div>
<svg style="left:134.5px;top:520px" width="12" height="12" viewBox="0 0 12 12"><path d="M0.5 0.5 H11 L7 5 V11 L4.5 9 V5 Z" fill="#c8c8c8" stroke="#777"/><text x="5" y="11.5" font-size="6" font-weight="bold" fill="#333" font-family="Liberation Sans">A</text></svg>
<svg style="left:153px;top:525px" width="5" height="3" viewBox="0 0 5 3"><path d="M0 0 H5 L2.5 3 Z" fill="#777"/></svg>
<div class="a" style="left:17px;top:538px;width:244px;height:197.5px;background:#fff;border:1px solid #6f767c"></div>
<div class="a" style="left:21px;top:542.3px;width:6.5px;height:6.5px;background:#fff;border:1px solid #999"></div>
<div class="a" style="left:22.5px;top:545.3px;width:3.5px;height:1px;background:#555"></div>
<div class="t" style="left:30.5px;top:540.97px;font-size:8.9px;font-weight:bold;color:#8f8b86;letter-spacing:-0.3px">Common</div>
<div class="a" style="left:29.5px;top:551px;width:104px;height:14px;background:#fcfbf2"></div>
<div class="t" style="left:37.2px;top:553.67px;font-size:8.9px;color:#2a2a2a;letter-spacing:-0.42px">Name</div>
<svg style="left:237px;top:555px" width="12" height="6.5" viewBox="0 0 12 6.5"><path d="M5 0.8 H3.2 A2.4 2.4 0 0 0 3.2 5.6 H5 M7 0.8 H8.8 A2.4 2.4 0 0 1 8.8 5.6 H7" fill="none" stroke="#68727c" stroke-width="1.4"/><path d="M3.5 3.2 H8.5" stroke="#68727c" stroke-width="1.1"/></svg>
<div class="t" style="left:37.2px;top:568.67px;font-size:8.9px;color:#2a2a2a;letter-spacing:-0.42px">Visible</div>
<svg style="left:237px;top:570px" width="12" height="6.5" viewBox="0 0 12 6.5"><path d="M5 0.8 H3.2 A2.4 2.4 0 0 0 3.2 5.6 H5 M7 0.8 H8.8 A2.4 2.4 0 0 1 8.8 5.6 H7" fill="none" stroke="#68727c" stroke-width="1.4"/><path d="M3.5 3.2 H8.5" stroke="#68727c" stroke-width="1.1"/></svg>
<div class="a" style="left:29.5px;top:581px;width:104px;height:14px;background:#fcfbf2"></div>
<div class="t" style="left:37.2px;top:583.67px;font-size:8.9px;color:#2a2a2a;letter-spacing:-0.42px">Mouseover Text</div>
<svg style="left:237px;top:585px" width="12" height="6.5" viewBox="0 0 12 6.5"><path d="M5 0.8 H3.2 A2.4 2.4 0 0 0 3.2 5.6 H5 M7 0.8 H8.8 A2.4 2.4 0 0 1 8.8 5.6 H7" fill="none" stroke="#68727c" stroke-width="1.4"/><path d="M3.5 3.2 H8.5" stroke="#68727c" stroke-width="1.1"/></svg>
<div class="t" style="left:37.2px;top:599.67px;font-size:8.9px;color:#2a2a2a;letter-spacing:-0.42px">Cursor</div>
<svg style="left:237px;top:601px" width="12" height="6.5" viewBox="0 0 12 6.5"><path d="M5 0.8 H3.2 A2.4 2.4 0 0 0 3.2 5.6 H5 M7 0.8 H8.8 A2.4 2.4 0 0 1 8.8 5.6 H7" fill="none" stroke="#68727c" stroke-width="1.4"/><path d="M3.5 3.2 H8.5" stroke="#68727c" stroke-width="1.1"/></svg>
<div class="a" style="left:21px;top:616px;width:6.5px;height:6.5px;background:#fff;border:1px solid #999"></div>
<div class="a" style="left:22.5px;top:619px;width:3.5px;height:1px;background:#555"></div>
<div class="t" style="left:30.5px;top:614.67px;font-size:8.9px;font-weight:bold;color:#8f8b86;letter-spacing:-0.3px">Data</div>
<div class="t" style="left:37.2px;top:627.67px;font-size:8.9px;color:#2a2a2a;letter-spacing:-0.42px">Quality</div>
<svg style="left:237px;top:629px" width="12" height="6.5" viewBox="0 0 12 6.5"><path d="M5 0.8 H3.2 A2.4 2.4 0 0 0 3.2 5.6 H5 M7 0.8 H8.8 A2.4 2.4 0 0 1 8.8 5.6 H7" fill="none" stroke="#68727c" stroke-width="1.4"/><path d="M3.5 3.2 H8.5" stroke="#68727c" stroke-width="1.1"/></svg>
<div class="a" style="left:21px;top:643px;width:6.5px;height:6.5px;background:#fff;border:1px solid #999"></div>
<div class="a" style="left:22.5px;top:646px;width:3.5px;height:1px;background:#555"></div>
<div class="t" style="left:30.5px;top:641.67px;font-size:8.9px;font-weight:bold;color:#8f8b86;letter-spacing:-0.3px">Appearance</div>
<div class="t" style="left:37.2px;top:654.67px;font-size:8.9px;color:#2a2a2a;letter-spacing:-0.42px">Fill Paint</div>
<svg style="left:237px;top:656px" width="12" height="6.5" viewBox="0 0 12 6.5"><path d="M5 0.8 H3.2 A2.4 2.4 0 0 0 3.2 5.6 H5 M7 0.8 H8.8 A2.4 2.4 0 0 1 8.8 5.6 H7" fill="none" stroke="#68727c" stroke-width="1.4"/><path d="M3.5 3.2 H8.5" stroke="#68727c" stroke-width="1.1"/></svg>
<div class="a" style="left:29.5px;top:667px;width:104px;height:14px;background:#fcfbf2"></div>
<div class="t" style="left:37.2px;top:669.67px;font-size:8.9px;color:#2a2a2a;letter-spacing:-0.42px">Stroke Paint</div>
<svg style="left:237px;top:671px" width="12" height="6.5" viewBox="0 0 12 6.5"><path d="M5 0.8 H3.2 A2.4 2.4 0 0 0 3.2 5.6 H5 M7 0.8 H8.8 A2.4 2.4 0 0 1 8.8 5.6 H7" fill="none" stroke="#68727c" stroke-width="1.4"/><path d="M3.5 3.2 H8.5" stroke="#68727c" stroke-width="1.1"/></svg>
<div class="t" style="left:37.2px;top:684.67px;font-size:8.9px;color:#2a2a2a;letter-spacing:-0.42px">Stroke Style</div>
<svg style="left:237px;top:686px" width="12" height="6.5" viewBox="0 0 12 6.5"><path d="M5 0.8 H3.2 A2.4 2.4 0 0 0 3.2 5.6 H5 M7 0.8 H8.8 A2.4 2.4 0 0 1 8.8 5.6 H7" fill="none" stroke="#68727c" stroke-width="1.4"/><path d="M3.5 3.2 H8.5" stroke="#68727c" stroke-width="1.1"/></svg>
<div class="a" style="left:29.5px;top:697px;width:104px;height:14px;background:#fcfbf2"></div>
<div class="t" style="left:37.2px;top:699.67px;font-size:8.9px;color:#2a2a2a;letter-spacing:-0.42px">Styles</div>
<svg style="left:237px;top:701px" width="12" height="6.5" viewBox="0 0 12 6.5"><path d="M5 0.8 H3.2 A2.4 2.4 0 0 0 3.2 5.6 H5 M7 0.8 H8.8 A2.4 2.4 0 0 1 8.8 5.6 H7" fill="none" stroke="#68727c" stroke-width="1.4"/><path d="M3.5 3.2 H8.5" stroke="#68727c" stroke-width="1.1"/></svg>
<div class="a" style="left:21px;top:715px;width:6.5px;height:6.5px;background:#fff;border:1px solid #999"></div>
<div class="a" style="left:22.5px;top:718px;width:3.5px;height:1px;background:#555"></div>
<div class="t" style="left:30.5px;top:713.67px;font-size:8.9px;font-weight:bold;color:#8f8b86;letter-spacing:-0.3px">Position</div>
<div class="a" style="left:29.5px;top:724px;width:104px;height:14px;background:#fcfbf2"></div>
<div class="t" style="left:37.2px;top:726.67px;font-size:8.9px;color:#2a2a2a;letter-spacing:-0.42px">X</div>
<svg style="left:237px;top:728px" width="12" height="6.5" viewBox="0 0 12 6.5"><path d="M5 0.8 H3.2 A2.4 2.4 0 0 0 3.2 5.6 H5 M7 0.8 H8.8 A2.4 2.4 0 0 1 8.8 5.6 H7" fill="none" stroke="#68727c" stroke-width="1.4"/><path d="M3.5 3.2 H8.5" stroke="#68727c" stroke-width="1.1"/></svg>
<div class="t" style="left:134.8px;top:553.67px;font-size:8.9px;color:#333;letter-spacing:-0.42px">Rectangle 8</div>
<svg style="left:223px;top:553px" width="10" height="10" viewBox="0 0 10 10"><rect x="0.5" y="0.5" width="9" height="9" fill="#f4f4f4" stroke="#8a8a8a"/><path d="M2 2.5 H4 M5 2.5 H8 M2 5 H4 M5 5 H8 M2 7.5 H4 M5 7.5 H8" stroke="#777"/></svg>
<div class="a" style="left:138px;top:568px;width:9.5px;height:9.5px;background:#4aa0e0;border-radius:1.5px"></div>
<svg style="left:139.5px;top:570px" width="7" height="6" viewBox="0 0 7 6"><path d="M0.5 3 L2.5 5 L6.5 0.8" fill="none" stroke="#fff" stroke-width="1.4"/></svg>
<div class="t" style="left:150.3px;top:568.67px;font-size:8.9px;color:#333;letter-spacing:-0.42px">true</div>
<svg style="left:223px;top:583px" width="10" height="10" viewBox="0 0 10 10"><rect x="0.5" y="0.5" width="9" height="9" fill="#f4f4f4" stroke="#8a8a8a"/><path d="M2 2.5 H4 M5 2.5 H8 M2 5 H4 M5 5 H8 M2 7.5 H4 M5 7.5 H8" stroke="#777"/></svg>
<div class="t" style="left:135.7px;top:599.67px;font-size:8.9px;color:#333;letter-spacing:-0.42px">Default</div>
<svg style="left:228px;top:602.5px" width="6" height="4" viewBox="0 0 6 4"><path d="M0 0 H6 L3 3.5 Z" fill="#666"/></svg>
<svg style="left:223px;top:627px" width="10" height="10" viewBox="0 0 10 10"><rect x="0.5" y="0.5" width="9" height="9" fill="#f4f4f4" stroke="#8a8a8a"/><path d="M2 2.5 H4 M5 2.5 H8 M2 5 H4 M5 5 H8 M2 7.5 H4 M5 7.5 H8" stroke="#777"/></svg>
<div class="t" style="left:135.7px;top:654.67px;font-size:8.9px;color:#333;letter-spacing:-0.42px">Solid Color</div>
<div class="a" style="left:196.7px;top:652.4px;width:22.2px;height:12.7px;background:#66aac8;border:1px solid #555c62;border-radius:1px"></div>
<svg style="left:223px;top:653px" width="12" height="12" viewBox="0 0 12 12"><path d="M0.5 11.5 L1.8 8 L8.5 1.3 L10.7 3.5 L4 10.2 Z" fill="#f0d040" stroke="#9a7a10" stroke-width="0.7"/><path d="M8.5 1.3 L9.5 0.3 L11.7 2.5 L10.7 3.5 Z" fill="#d84040"/><path d="M0.5 11.5 L1.3 9.2 L2.8 10.7 Z" fill="#444"/></svg>
<div class="t" style="left:135.7px;top:669.67px;font-size:8.9px;color:#333;letter-spacing:-0.42px">Solid Color</div>
<svg style="left:196.5px;top:667.5px" width="22.5" height="13" viewBox="0 0 22.5 13"><rect x="0" y="0" width="22.5" height="13" fill="#888"/><rect x="0.8" y="0.8" width="7" height="5.7" fill="#d8d8d8"/><rect x="7.8" y="0.8" width="7" height="5.7" fill="#3a3a3a"/><rect x="14.8" y="0.8" width="6.9" height="5.7" fill="#d8d8d8"/><rect x="0.8" y="6.5" width="7" height="5.7" fill="#3a3a3a"/><rect x="7.8" y="6.5" width="7" height="5.7" fill="#d8d8d8"/><rect x="14.8" y="6.5" width="6.9" height="5.7" fill="#3a3a3a"/></svg>
<svg style="left:223px;top:668px" width="12" height="12" viewBox="0 0 12 12"><path d="M0.5 11.5 L1.8 8 L8.5 1.3 L10.7 3.5 L4 10.2 Z" fill="#f0d040" stroke="#9a7a10" stroke-width="0.7"/><path d="M8.5 1.3 L9.5 0.3 L11.7 2.5 L10.7 3.5 Z" fill="#d84040"/><path d="M0.5 11.5 L1.3 9.2 L2.8 10.7 Z" fill="#444"/></svg>
<div class="a" style="left:134px;top:689px;width:85px;height:1px;background:#e2e2e2"></div>
<svg style="left:223px;top:683px" width="12" height="12" viewBox="0 0 12 12"><path d="M0.5 11.5 L1.8 8 L8.5 1.3 L10.7 3.5 L4 10.2 Z" fill="#f0d040" stroke="#9a7a10" stroke-width="0.7"/><path d="M8.5 1.3 L9.5 0.3 L11.7 2.5 L10.7 3.5 Z" fill="#d84040"/><path d="M0.5 11.5 L1.3 9.2 L2.8 10.7 Z" fill="#444"/></svg>
<div class="t" style="left:136.4px;top:699.67px;font-size:8.9px;color:#333;letter-spacing:-0.42px">&lt;No Data&gt;</div>
<svg style="left:223px;top:699px" width="11" height="11" viewBox="0 0 11 11"><rect x="0.5" y="0.5" width="9" height="9" fill="#f4f4f4" stroke="#8a8a8a"/><circle cx="5" cy="5" r="2.5" fill="none" stroke="#444"/><path d="M7 7 L10 10" stroke="#444" stroke-width="1.3"/></svg>
<div class="t" style="left:32.00px;width:200px;text-align:right;top:726.67px;font-size:8.9px;color:#333;letter-spacing:-0.3px">7.0</div>
<div class="a" style="left:251.5px;top:539px;width:8.5px;height:195.5px;background:#f7f7f7;border-left:1px solid #e8e8e8"></div>
<svg style="left:253.5px;top:541px" width="7" height="5" viewBox="0 0 7 5"><path d="M0.5 4 L3.5 1 L6.5 4" fill="none" stroke="#555"/></svg>
<div class="a" style="left:253px;top:547px;width:6.5px;height:122px;background:#c5cacf"></div>
<svg style="left:253.5px;top:728px" width="7" height="5" viewBox="0 0 7 5"><path d="M0.5 1 L3.5 4 L6.5 1" fill="none" stroke="#555"/></svg>
<div class="a" style="left:16px;top:737px;width:1370px;height:25.5px;background:#f9f9f9;border-top:1px solid #e2e2e2"></div>
<svg style="left:21px;top:744px" width="11" height="10" viewBox="0 0 11 10"><rect x="0" y="0" width="4.5" height="4" fill="#5a6470"/><rect x="6" y="0" width="4.5" height="4" fill="#5a6470"/><rect x="0" y="5.5" width="4.5" height="4" fill="#5a6470"/><rect x="6" y="5.5" width="4.5" height="4" fill="#5a6470"/></svg>
<div class="t" style="left:45.3px;top:744.62px;font-size:9px;font-weight:bold;color:#222;letter-spacing:-0.25px">Shape</div>
<div class="t" style="left:71.5px;top:745.18px;font-size:8.3px;font-family:Liberation Mono;color:#333;letter-spacing:-0.4px">"Rectangle 8"</div>
<div class="t" style="left:133px;top:744.67px;font-size:8.9px;color:#333;letter-spacing:-0.45px">(7,122) [93x61] Drag to move.</div>
<div class="a" style="left:1273.5px;top:739px;width:1px;height:19px;background:#d0d0d0"></div>
<div class="a" style="left:1291.4px;top:739px;width:1px;height:19px;background:#d0d0d0"></div>
<div class="a" style="left:1316.6px;top:739px;width:1px;height:19px;background:#d0d0d0"></div>
<div class="a" style="left:1370.5px;top:739px;width:1px;height:19px;background:#d0d0d0"></div>
<div class="t" style="left:1275.6px;top:744.67px;font-size:8.9px;color:#333;letter-spacing:-0.2px">(-,-)</div>
<div class="t" style="left:1294px;top:744.67px;font-size:8.9px;color:#333;letter-spacing:-0.45px">100%</div>
<div class="t" style="left:1318.8px;top:744.67px;font-size:8.9px;color:#333;letter-spacing:-0.45px">213 / 1024 mb</div>
<svg style="left:1373.5px;top:742.5px" width="12" height="13" viewBox="0 0 12 13"><ellipse cx="5" cy="2" rx="4.5" ry="1.8" fill="#9ab0c8" stroke="#556"/><path d="M0.5 2 V10 A4.5 1.8 0 0 0 9.5 10 V2" fill="#7a90a8" stroke="#556"/><circle cx="8.5" cy="9.5" r="3" fill="#3ab040"/><path d="M7 9.5 L8.2 10.7 L10 8.5" stroke="#fff" fill="none"/></svg>
<div class="a" style="left:267px;top:69.3px;width:933px;height:667px;background:#fff;border:2px solid #d9dcdf;border-bottom:none"></div>
<svg style="left:277px;top:70.3px" width="913" height="9.5" viewBox="0 0 913 9.5"><rect x="7.78" y="7" width="1" height="2" fill="#555"/><rect x="14.92" y="5" width="1" height="4" fill="#444"/><rect x="22.05" y="7" width="1" height="2" fill="#555"/><rect x="29.18" y="5" width="1" height="4" fill="#444"/><rect x="36.31" y="7" width="1" height="2" fill="#555"/><rect x="43.45" y="5" width="1" height="4" fill="#444"/><rect x="50.58" y="7" width="1" height="2" fill="#555"/><rect x="57.71" y="5" width="1" height="4" fill="#444"/><rect x="64.85" y="7" width="1" height="2" fill="#555"/><rect x="71.98" y="1" width="1" height="8" fill="#333"/><rect x="79.11" y="7" width="1" height="2" fill="#555"/><rect x="86.25" y="5" width="1" height="4" fill="#444"/><rect x="93.38" y="7" width="1" height="2" fill="#555"/><rect x="100.51" y="5" width="1" height="4" fill="#444"/><rect x="107.64" y="7" width="1" height="2" fill="#555"/><rect x="114.78" y="5" width="1" height="4" fill="#444"/><rect x="121.91" y="7" width="1" height="2" fill="#555"/><rect x="129.04" y="5" width="1" height="4" fill="#444"/><rect x="136.18" y="7" width="1" height="2" fill="#555"/><rect x="143.31" y="1" width="1" height="8" fill="#333"/><rect x="150.44" y="7" width="1" height="2" fill="#555"/><rect x="157.58" y="5" width="1" height="4" fill="#444"/><rect x="164.71" y="7" width="1" height="2" fill="#555"/><rect x="171.84" y="5" width="1" height="4" fill="#444"/><rect x="178.98" y="7" width="1" height="2" fill="#555"/><rect x="186.11" y="5" width="1" height="4" fill="#444"/><rect x="193.24" y="7" width="1" height="2" fill="#555"/><rect x="200.37" y="5" width="1" height="4" fill="#444"/><rect x="207.51" y="7" width="1" height="2" fill="#555"/><rect x="214.64" y="1" width="1" height="8" fill="#333"/><rect x="221.77" y="7" width="1" height="2" fill="#555"/><rect x="228.91" y="5" width="1" height="4" fill="#444"/><rect x="236.04" y="7" width="1" height="2" fill="#555"/><rect x="243.17" y="5" width="1" height="4" fill="#444"/><rect x="250.31" y="7" width="1" height="2" fill="#555"/><rect x="257.44" y="5" width="1" height="4" fill="#444"/><rect x="264.57" y="7" width="1" height="2" fill="#555"/><rect x="271.70" y="5" width="1" height="4" fill="#444"/><rect x="278.84" y="7" width="1" height="2" fill="#555"/><rect x="285.97" y="1" width="1" height="8" fill="#333"/><rect x="293.10" y="7" width="1" height="2" fill="#555"/><rect x="300.24" y="5" width="1" height="4" fill="#444"/><rect x="307.37" y="7" width="1" height="2" fill="#555"/><rect x="314.50" y="5" width="1" height="4" fill="#444"/><rect x="321.63" y="7" width="1" height="2" fill="#555"/><rect x="328.77" y="5" width="1" height="4" fill="#444"/><rect x="335.90" y="7" width="1" height="2" fill="#555"/><rect x="343.03" y="5" width="1" height="4" fill="#444"/><rect x="350.17" y="7" width="1" height="2" fill="#555"/><rect x="357.30" y="1" width="1" height="8" fill="#333"/><rect x="364.43" y="7" width="1" height="2" fill="#555"/><rect x="371.57" y="5" width="1" height="4" fill="#444"/><rect x="378.70" y="7" width="1" height="2" fill="#555"/><rect x="385.83" y="5" width="1" height="4" fill="#444"/><rect x="392.96" y="7" width="1" height="2" fill="#555"/><rect x="400.10" y="5" width="1" height="4" fill="#444"/><rect x="407.23" y="7" width="1" height="2" fill="#555"/><rect x="414.36" y="5" width="1" height="4" fill="#444"/><rect x="421.50" y="7" width="1" height="2" fill="#555"/><rect x="428.63" y="1" width="1" height="8" fill="#333"/><rect x="435.76" y="7" width="1" height="2" fill="#555"/><rect x="442.90" y="5" width="1" height="4" fill="#444"/><rect x="450.03" y="7" width="1" height="2" fill="#555"/><rect x="457.16" y="5" width="1" height="4" fill="#444"/><rect x="464.30" y="7" width="1" height="2" fill="#555"/><rect x="471.43" y="5" width="1" height="4" fill="#444"/><rect x="478.56" y="7" width="1" height="2" fill="#555"/><rect x="485.69" y="5" width="1" height="4" fill="#444"/><rect x="492.83" y="7" width="1" height="2" fill="#555"/><rect x="499.96" y="1" width="1" height="8" fill="#333"/><rect x="507.09" y="7" width="1" height="2" fill="#555"/><rect x="514.23" y="5" width="1" height="4" fill="#444"/><rect x="521.36" y="7" width="1" height="2" fill="#555"/><rect x="528.49" y="5" width="1" height="4" fill="#444"/><rect x="535.62" y="7" width="1" height="2" fill="#555"/><rect x="542.76" y="5" width="1" height="4" fill="#444"/><rect x="549.89" y="7" width="1" height="2" fill="#555"/><rect x="557.02" y="5" width="1" height="4" fill="#444"/><rect x="564.16" y="7" width="1" height="2" fill="#555"/><rect x="571.29" y="1" width="1" height="8" fill="#333"/><rect x="578.42" y="7" width="1" height="2" fill="#555"/><rect x="585.56" y="5" width="1" height="4" fill="#444"/><rect x="592.69" y="7" width="1" height="2" fill="#555"/><rect x="599.82" y="5" width="1" height="4" fill="#444"/><rect x="606.96" y="7" width="1" height="2" fill="#555"/><rect x="614.09" y="5" width="1" height="4" fill="#444"/><rect x="621.22" y="7" width="1" height="2" fill="#555"/><rect x="628.35" y="5" width="1" height="4" fill="#444"/><rect x="635.49" y="7" width="1" height="2" fill="#555"/><rect x="642.62" y="1" width="1" height="8" fill="#333"/><rect x="649.75" y="7" width="1" height="2" fill="#555"/><rect x="656.89" y="5" width="1" height="4" fill="#444"/><rect x="664.02" y="7" width="1" height="2" fill="#555"/><rect x="671.15" y="5" width="1" height="4" fill="#444"/><rect x="678.28" y="7" width="1" height="2" fill="#555"/><rect x="685.42" y="5" width="1" height="4" fill="#444"/><rect x="692.55" y="7" width="1" height="2" fill="#555"/><rect x="699.68" y="5" width="1" height="4" fill="#444"/><rect x="706.82" y="7" width="1" height="2" fill="#555"/><rect x="713.95" y="1" width="1" height="8" fill="#333"/><rect x="721.08" y="7" width="1" height="2" fill="#555"/><rect x="728.22" y="5" width="1" height="4" fill="#444"/><rect x="735.35" y="7" width="1" height="2" fill="#555"/><rect x="742.48" y="5" width="1" height="4" fill="#444"/><rect x="749.62" y="7" width="1" height="2" fill="#555"/><rect x="756.75" y="5" width="1" height="4" fill="#444"/><rect x="763.88" y="7" width="1" height="2" fill="#555"/><rect x="771.01" y="5" width="1" height="4" fill="#444"/><rect x="778.15" y="7" width="1" height="2" fill="#555"/><rect x="785.28" y="1" width="1" height="8" fill="#333"/><rect x="792.41" y="7" width="1" height="2" fill="#555"/><rect x="799.55" y="5" width="1" height="4" fill="#444"/><rect x="806.68" y="7" width="1" height="2" fill="#555"/><rect x="813.81" y="5" width="1" height="4" fill="#444"/><rect x="820.95" y="7" width="1" height="2" fill="#555"/><rect x="828.08" y="5" width="1" height="4" fill="#444"/><rect x="835.21" y="7" width="1" height="2" fill="#555"/><rect x="842.34" y="5" width="1" height="4" fill="#444"/><rect x="849.48" y="7" width="1" height="2" fill="#555"/><rect x="856.61" y="1" width="1" height="8" fill="#333"/><rect x="863.74" y="7" width="1" height="2" fill="#555"/><rect x="870.88" y="5" width="1" height="4" fill="#444"/><rect x="878.01" y="7" width="1" height="2" fill="#555"/><rect x="885.14" y="5" width="1" height="4" fill="#444"/><rect x="892.28" y="7" width="1" height="2" fill="#555"/><rect x="899.41" y="5" width="1" height="4" fill="#444"/><rect x="906.54" y="7" width="1" height="2" fill="#555"/><text x="73.18" y="6.3" font-size="5.6" fill="#333" font-family="Liberation Sans" letter-spacing="-0.2">100</text><text x="144.51" y="6.3" font-size="5.6" fill="#333" font-family="Liberation Sans" letter-spacing="-0.2">200</text><text x="215.84" y="6.3" font-size="5.6" fill="#333" font-family="Liberation Sans" letter-spacing="-0.2">300</text><text x="287.17" y="6.3" font-size="5.6" fill="#333" font-family="Liberation Sans" letter-spacing="-0.2">400</text><text x="358.50" y="6.3" font-size="5.6" fill="#333" font-family="Liberation Sans" letter-spacing="-0.2">500</text><text x="429.83" y="6.3" font-size="5.6" fill="#333" font-family="Liberation Sans" letter-spacing="-0.2">600</text><text x="501.16" y="6.3" font-size="5.6" fill="#333" font-family="Liberation Sans" letter-spacing="-0.2">700</text><text x="572.49" y="6.3" font-size="5.6" fill="#333" font-family="Liberation Sans" letter-spacing="-0.2">800</text><text x="643.82" y="6.3" font-size="5.6" fill="#333" font-family="Liberation Sans" letter-spacing="-0.2">900</text><text x="715.15" y="6.3" font-size="5.6" fill="#333" font-family="Liberation Sans" letter-spacing="-0.2">1000</text><text x="786.48" y="6.3" font-size="5.6" fill="#333" font-family="Liberation Sans" letter-spacing="-0.2">1100</text><text x="857.81" y="6.3" font-size="5.6" fill="#333" font-family="Liberation Sans" letter-spacing="-0.2">1200</text><rect x="0" y="8.5" width="913" height="1" fill="#777"/></svg>
<svg style="left:269px;top:70px" width="9" height="641" viewBox="0 0 9 641"><rect x="6.5" y="17.53" width="2" height="1" fill="#555"/><rect x="4.5" y="24.67" width="4" height="1" fill="#444"/><rect x="6.5" y="31.80" width="2" height="1" fill="#555"/><rect x="4.5" y="38.93" width="4" height="1" fill="#444"/><rect x="6.5" y="46.06" width="2" height="1" fill="#555"/><rect x="4.5" y="53.20" width="4" height="1" fill="#444"/><rect x="6.5" y="60.33" width="2" height="1" fill="#555"/><rect x="4.5" y="67.46" width="4" height="1" fill="#444"/><rect x="6.5" y="74.60" width="2" height="1" fill="#555"/><rect x="0.5" y="81.73" width="8" height="1" fill="#333"/><rect x="6.5" y="88.86" width="2" height="1" fill="#555"/><rect x="4.5" y="96.00" width="4" height="1" fill="#444"/><rect x="6.5" y="103.13" width="2" height="1" fill="#555"/><rect x="4.5" y="110.26" width="4" height="1" fill="#444"/><rect x="6.5" y="117.40" width="2" height="1" fill="#555"/><rect x="4.5" y="124.53" width="4" height="1" fill="#444"/><rect x="6.5" y="131.66" width="2" height="1" fill="#555"/><rect x="4.5" y="138.79" width="4" height="1" fill="#444"/><rect x="6.5" y="145.93" width="2" height="1" fill="#555"/><rect x="0.5" y="153.06" width="8" height="1" fill="#333"/><rect x="6.5" y="160.19" width="2" height="1" fill="#555"/><rect x="4.5" y="167.33" width="4" height="1" fill="#444"/><rect x="6.5" y="174.46" width="2" height="1" fill="#555"/><rect x="4.5" y="181.59" width="4" height="1" fill="#444"/><rect x="6.5" y="188.73" width="2" height="1" fill="#555"/><rect x="4.5" y="195.86" width="4" height="1" fill="#444"/><rect x="6.5" y="202.99" width="2" height="1" fill="#555"/><rect x="4.5" y="210.12" width="4" height="1" fill="#444"/><rect x="6.5" y="217.26" width="2" height="1" fill="#555"/><rect x="0.5" y="224.39" width="8" height="1" fill="#333"/><rect x="6.5" y="231.52" width="2" height="1" fill="#555"/><rect x="4.5" y="238.66" width="4" height="1" fill="#444"/><rect x="6.5" y="245.79" width="2" height="1" fill="#555"/><rect x="4.5" y="252.92" width="4" height="1" fill="#444"/><rect x="6.5" y="260.06" width="2" height="1" fill="#555"/><rect x="4.5" y="267.19" width="4" height="1" fill="#444"/><rect x="6.5" y="274.32" width="2" height="1" fill="#555"/><rect x="4.5" y="281.45" width="4" height="1" fill="#444"/><rect x="6.5" y="288.59" width="2" height="1" fill="#555"/><rect x="0.5" y="295.72" width="8" height="1" fill="#333"/><rect x="6.5" y="302.85" width="2" height="1" fill="#555"/><rect x="4.5" y="309.99" width="4" height="1" fill="#444"/><rect x="6.5" y="317.12" width="2" height="1" fill="#555"/><rect x="4.5" y="324.25" width="4" height="1" fill="#444"/><rect x="6.5" y="331.38" width="2" height="1" fill="#555"/><rect x="4.5" y="338.52" width="4" height="1" fill="#444"/><rect x="6.5" y="345.65" width="2" height="1" fill="#555"/><rect x="4.5" y="352.78" width="4" height="1" fill="#444"/><rect x="6.5" y="359.92" width="2" height="1" fill="#555"/><rect x="0.5" y="367.05" width="8" height="1" fill="#333"/><rect x="6.5" y="374.18" width="2" height="1" fill="#555"/><rect x="4.5" y="381.32" width="4" height="1" fill="#444"/><rect x="6.5" y="388.45" width="2" height="1" fill="#555"/><rect x="4.5" y="395.58" width="4" height="1" fill="#444"/><rect x="6.5" y="402.72" width="2" height="1" fill="#555"/><rect x="4.5" y="409.85" width="4" height="1" fill="#444"/><rect x="6.5" y="416.98" width="2" height="1" fill="#555"/><rect x="4.5" y="424.11" width="4" height="1" fill="#444"/><rect x="6.5" y="431.25" width="2" height="1" fill="#555"/><rect x="0.5" y="438.38" width="8" height="1" fill="#333"/><rect x="6.5" y="445.51" width="2" height="1" fill="#555"/><rect x="4.5" y="452.65" width="4" height="1" fill="#444"/><rect x="6.5" y="459.78" width="2" height="1" fill="#555"/><rect x="4.5" y="466.91" width="4" height="1" fill="#444"/><rect x="6.5" y="474.05" width="2" height="1" fill="#555"/><rect x="4.5" y="481.18" width="4" height="1" fill="#444"/><rect x="6.5" y="488.31" width="2" height="1" fill="#555"/><rect x="4.5" y="495.44" width="4" height="1" fill="#444"/><rect x="6.5" y="502.58" width="2" height="1" fill="#555"/><rect x="0.5" y="509.71" width="8" height="1" fill="#333"/><rect x="6.5" y="516.84" width="2" height="1" fill="#555"/><rect x="4.5" y="523.98" width="4" height="1" fill="#444"/><rect x="6.5" y="531.11" width="2" height="1" fill="#555"/><rect x="4.5" y="538.24" width="4" height="1" fill="#444"/><rect x="6.5" y="545.38" width="2" height="1" fill="#555"/><rect x="4.5" y="552.51" width="4" height="1" fill="#444"/><rect x="6.5" y="559.64" width="2" height="1" fill="#555"/><rect x="4.5" y="566.77" width="4" height="1" fill="#444"/><rect x="6.5" y="573.91" width="2" height="1" fill="#555"/><rect x="0.5" y="581.04" width="8" height="1" fill="#333"/><rect x="6.5" y="588.17" width="2" height="1" fill="#555"/><rect x="4.5" y="595.31" width="4" height="1" fill="#444"/><rect x="6.5" y="602.44" width="2" height="1" fill="#555"/><rect x="4.5" y="609.57" width="4" height="1" fill="#444"/><rect x="6.5" y="616.71" width="2" height="1" fill="#555"/><rect x="4.5" y="623.84" width="4" height="1" fill="#444"/><rect x="6.5" y="630.97" width="2" height="1" fill="#555"/><rect x="4.5" y="638.10" width="4" height="1" fill="#444"/><text transform="translate(0.9,83.03) rotate(90)" font-size="6.2" fill="#333" font-family="Liberation Sans" letter-spacing="-0.2">100</text><text transform="translate(0.9,154.36) rotate(90)" font-size="6.2" fill="#333" font-family="Liberation Sans" letter-spacing="-0.2">200</text><text transform="translate(0.9,225.69) rotate(90)" font-size="6.2" fill="#333" font-family="Liberation Sans" letter-spacing="-0.2">300</text><text transform="translate(0.9,297.02) rotate(90)" font-size="6.2" fill="#333" font-family="Liberation Sans" letter-spacing="-0.2">400</text><text transform="translate(0.9,368.35) rotate(90)" font-size="6.2" fill="#333" font-family="Liberation Sans" letter-spacing="-0.2">500</text><text transform="translate(0.9,439.68) rotate(90)" font-size="6.2" fill="#333" font-family="Liberation Sans" letter-spacing="-0.2">600</text><text transform="translate(0.9,511.01) rotate(90)" font-size="6.2" fill="#333" font-family="Liberation Sans" letter-spacing="-0.2">700</text><text transform="translate(0.9,582.34) rotate(90)" font-size="6.2" fill="#333" font-family="Liberation Sans" letter-spacing="-0.2">800</text><rect x="7.5" y="9.5" width="1" height="631" fill="#999"/></svg>
<div class="a" style="left:374px;top:90.5px;width:747.6px;height:605.5px;background:#fafafa"></div>
<div class="a" style="left:1189.5px;top:80px;width:8.7px;height:639px;background:#fbfbfb;border-left:1px solid #e4e6e8"></div>
<svg style="left:1190.5px;top:82.5px" width="7" height="5" viewBox="0 0 7 5"><path d="M0.5 4 L3.5 1 L6.5 4" fill="none" stroke="#555"/></svg>
<div class="a" style="left:1190.5px;top:89.5px;width:7.7px;height:538px;background:#c4c9cd"></div>
<svg style="left:1190.5px;top:703px" width="7" height="5" viewBox="0 0 7 5"><path d="M0.5 1 L3.5 4 L6.5 1" fill="none" stroke="#555"/></svg>
<div class="a" style="left:278px;top:710.4px;width:912px;height:8.6px;background:#fbfbfb;border-top:1px solid #e4e6e8"></div>
<svg style="left:281px;top:711.5px" width="5" height="7" viewBox="0 0 5 7"><path d="M4 0.5 L1 3.5 L4 6.5" fill="none" stroke="#555"/></svg>
<div class="a" style="left:286.5px;top:711px;width:837px;height:8px;background:#c4c9cd"></div>
<svg style="left:1182.5px;top:711.5px" width="5" height="7" viewBox="0 0 5 7"><path d="M1 0.5 L4 3.5 L1 6.5" fill="none" stroke="#555"/></svg>
<div class="a" style="left:269px;top:720px;width:929px;height:16.5px;background:#d6d9dc"></div>
<svg style="left:272.5px;top:722.5px" width="12" height="12" viewBox="0 0 12 12"><circle cx="6" cy="6" r="3.6" fill="none" stroke="#6a737c" stroke-width="1.6"/><rect x="5" y="0.5" width="2" height="2.4" fill="#6a737c" transform="rotate(0 6 6)"/><rect x="5" y="0.5" width="2" height="2.4" fill="#6a737c" transform="rotate(45 6 6)"/><rect x="5" y="0.5" width="2" height="2.4" fill="#6a737c" transform="rotate(90 6 6)"/><rect x="5" y="0.5" width="2" height="2.4" fill="#6a737c" transform="rotate(135 6 6)"/><rect x="5" y="0.5" width="2" height="2.4" fill="#6a737c" transform="rotate(180 6 6)"/><rect x="5" y="0.5" width="2" height="2.4" fill="#6a737c" transform="rotate(225 6 6)"/><rect x="5" y="0.5" width="2" height="2.4" fill="#6a737c" transform="rotate(270 6 6)"/><rect x="5" y="0.5" width="2" height="2.4" fill="#6a737c" transform="rotate(315 6 6)"/></svg>
<div class="t" style="left:287.5px;top:723.82px;font-size:9.2px;font-weight:bold;color:#333;letter-spacing:-0.55px">Welcome</div>
<div class="a" style="left:328px;top:720.6px;width:104px;height:16px;background:#fff;border-top:2px solid #2f9de8"></div>
<svg style="left:332px;top:723px" width="12" height="11" viewBox="0 0 12 11"><rect x="0.6" y="0.6" width="10.8" height="9.8" fill="#fff" stroke="#4a5560" stroke-width="1.2"/><rect x="0.6" y="0.6" width="10.8" height="2.4" fill="#4a5560"/><rect x="1.5" y="1.2" width="3" height="1.2" fill="#e88a2a"/></svg>
<div class="t" style="left:346.8px;top:724.22px;font-size:9.2px;font-weight:bold;color:#333;letter-spacing:-0.25px">Main Window (2)</div>
<svg style="left:421.5px;top:725.5px" width="7" height="7" viewBox="0 0 7 7"><path d="M0.5 0.5 L6.5 6.5 M6.5 0.5 L0.5 6.5" stroke="#222" stroke-width="1.3"/></svg>
<div class="a" style="left:1200px;top:70px;width:5px;height:667px;background:#f6f6f6"></div>
<div class="a" style="left:393px;top:109.2px;width:571px;height:3.4px;background:#d2d2d2;box-shadow:inset 0 0 0 0.5px #c4c4c4"></div>
<div class="a" style="left:411.5px;top:261.0px;width:405.5px;height:3.2px;background:#d2d2d2;box-shadow:inset 0 0 0 0.5px #c4c4c4"></div>
<div class="a" style="left:411.2px;top:262px;width:3.2px;height:33.5px;background:#d2d2d2;box-shadow:inset 0 0 0 0.5px #c4c4c4"></div>
<div class="a" style="left:653.9px;top:262px;width:3.2px;height:34px;background:#d2d2d2;box-shadow:inset 0 0 0 0.5px #c4c4c4"></div>
<div class="a" style="left:814.3px;top:229px;width:3.2px;height:67px;background:#d2d2d2;box-shadow:inset 0 0 0 0.5px #c4c4c4"></div>
<div class="a" style="left:814.3px;top:228.7px;width:60.10000000000002px;height:3px;background:#d2d2d2;box-shadow:inset 0 0 0 0.5px #c4c4c4"></div>
<div class="a" style="left:411.4px;top:505px;width:3.2px;height:29.5px;background:#d2d2d2;box-shadow:inset 0 0 0 0.5px #c4c4c4"></div>
<div class="a" style="left:411.4px;top:531.45px;width:404.80000000000007px;height:3.1px;background:#d2d2d2;box-shadow:inset 0 0 0 0.5px #c4c4c4"></div>
<div class="a" style="left:663.0px;top:505px;width:3.2px;height:28px;background:#d2d2d2;box-shadow:inset 0 0 0 0.5px #c4c4c4"></div>
<div class="a" style="left:813.0px;top:505px;width:3.2px;height:97.70000000000005px;background:#d2d2d2;box-shadow:inset 0 0 0 0.5px #c4c4c4"></div>
<div class="a" style="left:737px;top:599.7px;width:79.20000000000005px;height:3px;background:#d2d2d2;box-shadow:inset 0 0 0 0.5px #c4c4c4"></div>
<div class="a" style="left:580px;top:599.6px;width:45px;height:3.2px;background:#d2d2d2;box-shadow:inset 0 0 0 0.5px #c4c4c4"></div>
<svg style="left:437.8px;top:99.8px" width="64" height="64" viewBox="0 0 64 64"><rect x="0.5" y="0.5" width="63" height="63" fill="#d6d6d6" stroke="#ababab"/><circle cx="32" cy="32" r="28.2" fill="#a9a9a9"/><line x1="32" y1="32" x2="60.50" y2="32.00" stroke="#d8d8d8" stroke-width="1.1"/><line x1="32" y1="32" x2="52.15" y2="52.15" stroke="#d8d8d8" stroke-width="1.1"/><line x1="32" y1="32" x2="32.00" y2="60.50" stroke="#d8d8d8" stroke-width="1.1"/><line x1="32" y1="32" x2="11.85" y2="52.15" stroke="#d8d8d8" stroke-width="1.1"/><line x1="32" y1="32" x2="3.50" y2="32.00" stroke="#d8d8d8" stroke-width="1.1"/><line x1="32" y1="32" x2="11.85" y2="11.85" stroke="#d8d8d8" stroke-width="1.1"/><line x1="32" y1="32" x2="32.00" y2="3.50" stroke="#d8d8d8" stroke-width="1.1"/><line x1="32" y1="32" x2="52.15" y2="11.85" stroke="#d8d8d8" stroke-width="1.1"/><circle cx="32" cy="32" r="6.6" fill="#d6d6d6"/></svg>
<svg style="left:608.8px;top:99.8px" width="64" height="64" viewBox="0 0 64 64"><rect x="0.5" y="0.5" width="63" height="63" fill="#d6d6d6" stroke="#ababab"/><circle cx="32" cy="32" r="28.2" fill="#a9a9a9"/><line x1="32" y1="32" x2="60.50" y2="32.00" stroke="#d8d8d8" stroke-width="1.1"/><line x1="32" y1="32" x2="52.15" y2="52.15" stroke="#d8d8d8" stroke-width="1.1"/><line x1="32" y1="32" x2="32.00" y2="60.50" stroke="#d8d8d8" stroke-width="1.1"/><line x1="32" y1="32" x2="11.85" y2="52.15" stroke="#d8d8d8" stroke-width="1.1"/><line x1="32" y1="32" x2="3.50" y2="32.00" stroke="#d8d8d8" stroke-width="1.1"/><line x1="32" y1="32" x2="11.85" y2="11.85" stroke="#d8d8d8" stroke-width="1.1"/><line x1="32" y1="32" x2="32.00" y2="3.50" stroke="#d8d8d8" stroke-width="1.1"/><line x1="32" y1="32" x2="52.15" y2="11.85" stroke="#d8d8d8" stroke-width="1.1"/><circle cx="32" cy="32" r="6.6" fill="#d6d6d6"/></svg>
<svg style="left:779px;top:99.8px" width="64" height="64" viewBox="0 0 64 64"><rect x="0.5" y="0.5" width="63" height="63" fill="#d6d6d6" stroke="#ababab"/><circle cx="32" cy="32" r="28.2" fill="#a9a9a9"/><line x1="32" y1="32" x2="60.50" y2="32.00" stroke="#d8d8d8" stroke-width="1.1"/><line x1="32" y1="32" x2="52.15" y2="52.15" stroke="#d8d8d8" stroke-width="1.1"/><line x1="32" y1="32" x2="32.00" y2="60.50" stroke="#d8d8d8" stroke-width="1.1"/><line x1="32" y1="32" x2="11.85" y2="52.15" stroke="#d8d8d8" stroke-width="1.1"/><line x1="32" y1="32" x2="3.50" y2="32.00" stroke="#d8d8d8" stroke-width="1.1"/><line x1="32" y1="32" x2="11.85" y2="11.85" stroke="#d8d8d8" stroke-width="1.1"/><line x1="32" y1="32" x2="32.00" y2="3.50" stroke="#d8d8d8" stroke-width="1.1"/><line x1="32" y1="32" x2="52.15" y2="11.85" stroke="#d8d8d8" stroke-width="1.1"/><circle cx="32" cy="32" r="6.6" fill="#d6d6d6"/></svg>
<svg style="left:963px;top:105px" width="4.8" height="13.5" viewBox="0 0 4.8 13.5"><rect x="0.5" y="0.5" width="3.8" height="12.5" fill="#d4d4d4" stroke="#bdbdbd"/></svg>
<svg style="left:967.5px;top:106.5px" width="22" height="11.5" viewBox="0 0 22 11.5"><rect x="0" y="0.5" width="21" height="10.5" fill="#d4d4d4" stroke="#bdbdbd"/></svg>
<svg style="left:974.5px;top:103.2px" width="50" height="50" viewBox="0 0 50 50"><circle cx="25" cy="25" r="24.3" fill="#d4d4d4" stroke="#bebebe"/><circle cx="25" cy="25" r="20.7" fill="#a9a9a9"/><line x1="25" y1="25" x2="45.70" y2="25.00" stroke="#d4d4d4" stroke-width="1.3"/><line x1="25" y1="25" x2="39.64" y2="39.64" stroke="#d4d4d4" stroke-width="1.3"/><line x1="25" y1="25" x2="25.00" y2="45.70" stroke="#d4d4d4" stroke-width="1.3"/><line x1="25" y1="25" x2="10.36" y2="39.64" stroke="#d4d4d4" stroke-width="1.3"/><line x1="25" y1="25" x2="4.30" y2="25.00" stroke="#d4d4d4" stroke-width="1.3"/><line x1="25" y1="25" x2="10.36" y2="10.36" stroke="#d4d4d4" stroke-width="1.3"/><line x1="25" y1="25" x2="25.00" y2="4.30" stroke="#d4d4d4" stroke-width="1.3"/><line x1="25" y1="25" x2="39.64" y2="10.36" stroke="#d4d4d4" stroke-width="1.3"/><circle cx="25" cy="25" r="4.2" fill="#d4d4d4"/></svg>
<div class="a" style="left:420px;top:169.8px;width:104.29999999999995px;height:17.599999999999994px;background:#5b6282;border:1px solid #4e5470"></div>
<div class="t" style="left:372.15px;width:200px;text-align:center;top:173.54px;font-size:10.5px;font-weight:bold;color:#fff;letter-spacing:-0.1px">Fan 1</div>
<div class="a" style="left:420px;top:191.5px;width:104.29999999999995px;height:17.5px;background:#5b6282;border:1px solid #4e5470"></div>
<div class="t" style="left:372.15px;width:200px;text-align:center;top:195.19px;font-size:10.5px;font-weight:bold;color:#8ccb3e;letter-spacing:-0.1px">100 RPM</div>
<div class="a" style="left:588.8px;top:169.8px;width:103.70000000000005px;height:17.599999999999994px;background:#5b6282;border:1px solid #4e5470"></div>
<div class="t" style="left:540.65px;width:200px;text-align:center;top:173.54px;font-size:10.5px;font-weight:bold;color:#fff;letter-spacing:-0.1px">Fan 2</div>
<div class="a" style="left:588.8px;top:191.5px;width:103.70000000000005px;height:17.5px;background:#5b6282;border:1px solid #4e5470"></div>
<div class="t" style="left:540.65px;width:200px;text-align:center;top:195.19px;font-size:10.5px;font-weight:bold;color:#8ccb3e;letter-spacing:-0.1px">100 RPM</div>
<div class="a" style="left:758px;top:169.8px;width:103.79999999999995px;height:17.599999999999994px;background:#5b6282;border:1px solid #4e5470"></div>
<div class="t" style="left:709.90px;width:200px;text-align:center;top:173.54px;font-size:10.5px;font-weight:bold;color:#fff;letter-spacing:-0.1px">Fan 3</div>
<div class="a" style="left:758px;top:191.5px;width:103.79999999999995px;height:17.5px;background:#5b6282;border:1px solid #4e5470"></div>
<div class="t" style="left:709.90px;width:200px;text-align:center;top:195.19px;font-size:10.5px;font-weight:bold;color:#8ccb3e;letter-spacing:-0.1px">15 RPM</div>
<div class="a" style="left:937.5px;top:169.8px;width:103.5px;height:17.599999999999994px;background:#5b6282;border:1px solid #4e5470"></div>
<div class="t" style="left:889.25px;width:200px;text-align:center;top:173.54px;font-size:10.5px;font-weight:bold;color:#fff;letter-spacing:-0.1px">Blower</div>
<div class="a" style="left:937.5px;top:191.5px;width:103.5px;height:17.5px;background:#5b6282;border:1px solid #4e5470"></div>
<div class="t" style="left:889.25px;width:200px;text-align:center;top:195.19px;font-size:10.5px;font-weight:bold;color:#8ccb3e;letter-spacing:-0.1px">99.5 CFM</div>
<div class="a" style="left:1047.4px;top:135.6px;width:50px;height:15.200000000000017px;background:#fafafa;border:1px solid #c8c8c8;border-radius:1px"></div>
<div class="t" style="left:972.40px;width:200px;text-align:center;top:139.13px;font-size:8.6px;font-weight:bold;color:#555;letter-spacing:-0.1px">Hand</div>
<div class="a" style="left:1047.4px;top:155px;width:50px;height:15.199999999999989px;background:#fafafa;border:1px solid #c8c8c8;border-radius:1px"></div>
<div class="t" style="left:972.40px;width:200px;text-align:center;top:158.53px;font-size:8.6px;font-weight:bold;color:#555;letter-spacing:-0.1px">Off</div>
<div class="a" style="left:1047.4px;top:173.3px;width:50px;height:15.299999999999983px;background:#5cab5c;border:1px solid #4e9a4e;border-radius:1px"></div>
<div class="t" style="left:972.40px;width:200px;text-align:center;top:176.88px;font-size:8.6px;font-weight:bold;color:#fff;letter-spacing:-0.1px">Auto</div>
<svg style="left:463.2px;top:242.5px" width="38" height="34" viewBox="0 0 38 34"><path d="M0.5 8 L37.5 33.5 V8 L0.5 33.5 Z" fill="#d0d0d0"/><rect x="6.5" y="0.5" width="24" height="3.8" fill="#d0d0d0"/><rect x="18" y="4" width="2" height="17" fill="#d0d0d0"/></svg>
<div class="t" style="left:379.20px;width:200px;text-align:center;top:225.77px;font-size:9.1px;font-weight:bold;color:#cdcdcd;letter-spacing:0px">Closed</div>
<svg style="left:590.5px;top:242.5px" width="38" height="34" viewBox="0 0 38 34"><path d="M0.5 8 L37.5 33.5 V8 L0.5 33.5 Z" fill="#5a6080"/><rect x="6.5" y="0.5" width="24" height="3.8" fill="#5a6080"/><rect x="18" y="4" width="2" height="17" fill="#5a6080"/></svg>
<div class="t" style="left:506.50px;width:200px;text-align:center;top:225.77px;font-size:9.1px;font-weight:bold;color:#5a6080;letter-spacing:0px">Open</div>
<svg style="left:745.2px;top:242.5px" width="38" height="34" viewBox="0 0 38 34"><path d="M0.5 8 L37.5 33.5 V8 L0.5 33.5 Z" fill="#d0d0d0"/><rect x="6.5" y="0.5" width="24" height="3.8" fill="#d0d0d0"/><rect x="18" y="4" width="2" height="17" fill="#d0d0d0"/></svg>
<div class="t" style="left:661.20px;width:200px;text-align:center;top:225.77px;font-size:9.1px;font-weight:bold;color:#cdcdcd;letter-spacing:0px">Closed</div>
<div class="a" style="left:388px;top:295.5px;width:75.5px;height:137.5px;background:#d6d6d6;border:1px solid #b5b5b5"></div>
<div class="a" style="left:394.8px;top:303.5px;width:61.89999999999998px;height:121.0px;background:#fff;border:1px solid #c6c6c6;border-radius:8px;overflow:hidden"><div class="a" style="left:0;right:0;bottom:0;top:77.5px;background:#68aac8"></div></div>
<div class="t" style="left:325.75px;width:200px;text-align:center;top:399.84px;font-size:10.5px;font-weight:bold;color:#262626">33 %</div>
<div class="a" style="left:622.3px;top:296px;width:75.10000000000002px;height:136.8px;background:#d6d6d6;border:1px solid #b5b5b5"></div>
<div class="a" style="left:629.0999999999999px;top:304px;width:61.500000000000114px;height:120.30000000000001px;background:#fff;border:1px solid #c6c6c6;border-radius:8px;overflow:hidden"><div class="a" style="left:0;right:0;bottom:0;top:49.19999999999999px;background:#6ba470"></div></div>
<div class="t" style="left:559.85px;width:200px;text-align:center;top:399.84px;font-size:10.5px;font-weight:bold;color:#262626">57 %</div>
<div class="a" style="left:773.2px;top:296px;width:75.39999999999998px;height:136.8px;background:#d6d6d6;border:1px solid #b5b5b5"></div>
<div class="a" style="left:780.0px;top:304px;width:61.80000000000007px;height:120.30000000000001px;background:#fff;border:1px solid #c6c6c6;border-radius:8px;overflow:hidden"><div class="a" style="left:0;right:0;bottom:0;top:23px;background:#d3ad4a"></div></div>
<div class="t" style="left:710.90px;width:200px;text-align:center;top:399.84px;font-size:10.5px;font-weight:bold;color:#262626">84 %</div>
<div class="a" style="left:375.4px;top:444.8px;width:104.60000000000002px;height:17.69999999999999px;background:#5b6282;border:1px solid #4e5470"></div>
<div class="t" style="left:327.70px;width:200px;text-align:center;top:448.59px;font-size:10.5px;font-weight:bold;color:#fff;letter-spacing:-0.1px">Dye Tank 1</div>
<div class="a" style="left:375.4px;top:466px;width:104.60000000000002px;height:17.399999999999977px;background:#5b6282;border:1px solid #4e5470"></div>
<div class="t" style="left:327.70px;width:200px;text-align:center;top:469.64px;font-size:10.5px;font-weight:bold;color:#8ccb3e;letter-spacing:-0.1px">33 %</div>
<div class="a" style="left:375.4px;top:487.5px;width:104.60000000000002px;height:17.5px;background:#5b6282;border:1px solid #4e5470"></div>
<div class="t" style="left:327.70px;width:200px;text-align:center;top:491.19px;font-size:10.5px;font-weight:bold;color:#8ccb3e;letter-spacing:-0.1px">125 °F</div>
<div class="a" style="left:611px;top:444.8px;width:104.20000000000005px;height:17.69999999999999px;background:#5b6282;border:1px solid #4e5470"></div>
<div class="t" style="left:563.10px;width:200px;text-align:center;top:448.59px;font-size:10.5px;font-weight:bold;color:#fff;letter-spacing:-0.1px">Dye Tank 2</div>
<div class="a" style="left:611px;top:466px;width:104.20000000000005px;height:17.399999999999977px;background:#5b6282;border:1px solid #4e5470"></div>
<div class="t" style="left:563.10px;width:200px;text-align:center;top:469.64px;font-size:10.5px;font-weight:bold;color:#8ccb3e;letter-spacing:-0.1px">57 %</div>
<div class="a" style="left:611px;top:487.5px;width:104.20000000000005px;height:17.5px;background:#5b6282;border:1px solid #4e5470"></div>
<div class="t" style="left:563.10px;width:200px;text-align:center;top:491.19px;font-size:10.5px;font-weight:bold;color:#8ccb3e;letter-spacing:-0.1px">143 °F</div>
<div class="a" style="left:758px;top:444.8px;width:104px;height:17.69999999999999px;background:#5b6282;border:1px solid #4e5470"></div>
<div class="t" style="left:710.00px;width:200px;text-align:center;top:448.59px;font-size:10.5px;font-weight:bold;color:#fff;letter-spacing:-0.1px">Dye Tank 3</div>
<div class="a" style="left:758px;top:466px;width:104px;height:17.399999999999977px;background:#5b6282;border:1px solid #4e5470"></div>
<div class="t" style="left:710.00px;width:200px;text-align:center;top:469.64px;font-size:10.5px;font-weight:bold;color:#8ccb3e;letter-spacing:-0.1px">84 %</div>
<div class="a" style="left:758px;top:487.5px;width:104px;height:17.5px;background:#5b6282;border:1px solid #4e5470"></div>
<div class="t" style="left:710.00px;width:200px;text-align:center;top:491.19px;font-size:10.5px;font-weight:bold;color:#f06a45;letter-spacing:-0.1px">212 °F</div>
<div class="a" style="left:387px;top:294.3px;width:77px;height:139px;border:1px solid #f4a4a4"></div>
<div class="a" style="left:390.5px;top:381px;width:69.5px;height:46px;border:1px dashed #555"></div>
<svg style="left:386.5px;top:377px" width="8" height="8" viewBox="0 0 8 8"><g transform="rotate(-90 4 4)"><rect x="0.5" y="0.5" width="7" height="7" fill="#222"/><path d="M2 6 L6 2 M3.5 2 H6 V4.5" stroke="#fff" stroke-width="0.8" fill="none"/></g></svg>
<svg style="left:456px;top:377px" width="8" height="8" viewBox="0 0 8 8"><g transform="rotate(0 4 4)"><rect x="0.5" y="0.5" width="7" height="7" fill="#222"/><path d="M2 6 L6 2 M3.5 2 H6 V4.5" stroke="#fff" stroke-width="0.8" fill="none"/></g></svg>
<svg style="left:386.5px;top:423px" width="8" height="8" viewBox="0 0 8 8"><g transform="rotate(180 4 4)"><rect x="0.5" y="0.5" width="7" height="7" fill="#222"/><path d="M2 6 L6 2 M3.5 2 H6 V4.5" stroke="#fff" stroke-width="0.8" fill="none"/></g></svg>
<svg style="left:456px;top:423px" width="8" height="8" viewBox="0 0 8 8"><g transform="rotate(90 4 4)"><rect x="0.5" y="0.5" width="7" height="7" fill="#222"/><path d="M2 6 L6 2 M3.5 2 H6 V4.5" stroke="#fff" stroke-width="0.8" fill="none"/></g></svg>
<svg style="left:422.2px;top:372px" width="6" height="10" viewBox="0 0 6 10"><path d="M3 0 L6 3 H4 V7 H6 L3 10 L0 7 H2 V3 H0 Z" fill="#222"/></svg>
<svg style="left:422.2px;top:426px" width="6" height="10" viewBox="0 0 6 10"><path d="M3 0 L6 3 H4 V7 H6 L3 10 L0 7 H2 V3 H0 Z" fill="#222"/></svg>
<svg style="left:381.5px;top:401px" width="10" height="6" viewBox="0 0 10 6"><path d="M0 3 L3 0 V2 H7 V0 L10 3 L7 6 V4 H3 V6 Z" fill="#222"/></svg>
<svg style="left:459px;top:401px" width="10" height="6" viewBox="0 0 10 6"><path d="M0 3 L3 0 V2 H7 V0 L10 3 L7 6 V4 H3 V6 Z" fill="#222"/></svg>
<svg style="left:449px;top:409px" width="9" height="14" viewBox="0 0 9 14"><path d="M0.5 0.5 V11 L3 8.5 L5 13 L7 12 L5 7.8 H8.5 Z" fill="#fff" stroke="#222" stroke-width="0.9"/></svg>
<div class="a" style="left:416.2px;top:544px;width:164.8px;height:99px;background:#d6d6d6;border:1px solid #b5b5b5"></div>
<div class="a" style="left:430.2px;top:549.4px;width:137.6px;height:88.6px;background:#fff;border:1px solid #c6c6c6;border-radius:18px/9px;overflow:hidden"><div class="a" style="left:0;right:0;bottom:0;top:27.9px;background:#68aac8"></div></div>
<div class="t" style="left:398.40px;width:200px;text-align:center;top:618.54px;font-size:10.5px;font-weight:bold;color:#262626">75 %</div>
<div class="a" style="left:448.2px;top:652.5px;width:104.40000000000003px;height:17.799999999999955px;background:#5b6282;border:1px solid #4e5470"></div>
<div class="t" style="left:400.40px;width:200px;text-align:center;top:656.34px;font-size:10.5px;font-weight:bold;color:#fff;letter-spacing:-0.1px">Storage</div>
<div class="a" style="left:448.2px;top:674px;width:104.40000000000003px;height:18.200000000000045px;background:#5b6282;border:1px solid #4e5470"></div>
<div class="t" style="left:400.40px;width:200px;text-align:center;top:678.04px;font-size:10.5px;font-weight:bold;color:#8ccb3e;letter-spacing:-0.1px">75 %</div>
<div class="a" style="left:625.7px;top:652.5px;width:104.39999999999998px;height:17.799999999999955px;background:#5b6282;border:1px solid #4e5470"></div>
<div class="t" style="left:577.90px;width:200px;text-align:center;top:656.34px;font-size:10.5px;font-weight:bold;color:#fff;letter-spacing:-0.1px">Cooler</div>
<div class="a" style="left:625.7px;top:674px;width:104.39999999999998px;height:18.200000000000045px;background:#5b6282;border:1px solid #4e5470"></div>
<div class="t" style="left:577.90px;width:200px;text-align:center;top:678.04px;font-size:10.5px;font-weight:bold;color:#8ccb3e;letter-spacing:-0.1px">102 °F</div>
<svg style="left:623.8px;top:560.5px" width="115" height="74" viewBox="0 0 115 74"><rect x="0.5" y="6.5" width="113" height="60.5" fill="#d6d6d6" stroke="#b9b9b9" stroke-width="0.9"/><rect x="6.00" y="0.5" width="11.24" height="72" rx="5.6" ry="11" fill="#d6d6d6" stroke="#b9b9b9" stroke-width="0.9"/><rect x="17.24" y="0.5" width="11.24" height="72" rx="5.6" ry="11" fill="#d6d6d6" stroke="#b9b9b9" stroke-width="0.9"/><rect x="28.48" y="0.5" width="11.24" height="72" rx="5.6" ry="11" fill="#d6d6d6" stroke="#b9b9b9" stroke-width="0.9"/><rect x="39.72" y="0.5" width="11.24" height="72" rx="5.6" ry="11" fill="#d6d6d6" stroke="#b9b9b9" stroke-width="0.9"/><rect x="50.96" y="0.5" width="11.24" height="72" rx="5.6" ry="11" fill="#d6d6d6" stroke="#b9b9b9" stroke-width="0.9"/><rect x="62.20" y="0.5" width="11.24" height="72" rx="5.6" ry="11" fill="#d6d6d6" stroke="#b9b9b9" stroke-width="0.9"/><rect x="73.44" y="0.5" width="11.24" height="72" rx="5.6" ry="11" fill="#d6d6d6" stroke="#b9b9b9" stroke-width="0.9"/><rect x="84.68" y="0.5" width="11.24" height="72" rx="5.6" ry="11" fill="#d6d6d6" stroke="#b9b9b9" stroke-width="0.9"/><rect x="95.92" y="0.5" width="11.24" height="72" rx="5.6" ry="11" fill="#d6d6d6" stroke="#b9b9b9" stroke-width="0.9"/></svg>
<div class="a" style="left:896px;top:216px;width:225px;height:17px;background:linear-gradient(90deg,#f0f0f0,#f6f6f6 70%,#f8f8f8)"></div>
<div class="t" style="left:897.4px;top:220.42px;font-size:9.2px;font-weight:bold;color:#a6a6a6;letter-spacing:-0.05px">Tank Status Overview</div>
<div class="a" style="left:896px;top:233.4px;width:225px;height:93px;background:#fff;border:1px solid #c8ccd0"></div>
<div class="a" style="left:897px;top:234.4px;width:223px;height:15px;background:linear-gradient(#fcfdfe,#eef1f4);border-bottom:1px solid #d8dde2"></div>
<div class="a" style="left:941px;top:234.4px;width:1px;height:15px;background:#d4d9de"></div>
<div class="a" style="left:986px;top:234.4px;width:1px;height:15px;background:#d4d9de"></div>
<div class="a" style="left:1031px;top:234.4px;width:1px;height:15px;background:#d4d9de"></div>
<div class="a" style="left:1076px;top:234.4px;width:1px;height:15px;background:#d4d9de"></div>
<div class="t" style="left:819.00px;width:200px;text-align:center;top:237.22px;font-size:8.8px;font-weight:bold;color:#222;letter-spacing:-0.15px">name</div>
<div class="t" style="left:863.50px;width:200px;text-align:center;top:237.22px;font-size:8.8px;font-weight:bold;color:#222;letter-spacing:-0.15px">Temp</div>
<div class="t" style="left:908.50px;width:200px;text-align:center;top:237.22px;font-size:8.8px;font-weight:bold;color:#222;letter-spacing:-0.15px">Press...</div>
<div class="t" style="left:953.50px;width:200px;text-align:center;top:237.22px;font-size:8.8px;font-weight:bold;color:#222;letter-spacing:-0.15px">Alarms</div>
<div class="t" style="left:998.50px;width:200px;text-align:center;top:237.22px;font-size:8.8px;font-weight:bold;color:#222;letter-spacing:-0.15px">Status</div>
<div class="a" style="left:897px;top:249px;width:223px;height:15.199999999999989px;background:#f5c27c"></div>
<div class="a" style="left:941px;top:249px;width:1.2px;height:15.199999999999989px;background:rgba(255,255,255,0.55)"></div>
<div class="a" style="left:986px;top:249px;width:1.2px;height:15.199999999999989px;background:rgba(255,255,255,0.55)"></div>
<div class="a" style="left:1031px;top:249px;width:1.2px;height:15.199999999999989px;background:rgba(255,255,255,0.55)"></div>
<div class="a" style="left:1076px;top:249px;width:1.2px;height:15.199999999999989px;background:rgba(255,255,255,0.55)"></div>
<div class="t" style="left:904px;top:252.16px;font-size:9.5px;font-weight:bold;color:#222;letter-spacing:-0.1px">Tank 1</div>
<div class="t" style="left:778.40px;width:200px;text-align:right;top:252.16px;font-size:9.5px;font-weight:bold;color:#222;letter-spacing:-0.1px">125</div>
<div class="t" style="left:823.00px;width:200px;text-align:right;top:252.16px;font-size:9.5px;font-weight:bold;color:#222;letter-spacing:-0.1px">132.3</div>
<div class="t" style="left:868.00px;width:200px;text-align:right;top:252.16px;font-size:9.5px;font-weight:bold;color:#222;letter-spacing:-0.1px">0</div>
<div class="t" style="left:1083px;top:252.16px;font-size:9.5px;font-weight:bold;color:#222;letter-spacing:-0.1px">Off</div>
<div class="a" style="left:897px;top:264.2px;width:223px;height:15.800000000000011px;background:#fff"></div>
<div class="t" style="left:904px;top:267.66px;font-size:9.5px;font-weight:bold;color:#222;letter-spacing:-0.1px">Tank 2</div>
<div class="t" style="left:778.40px;width:200px;text-align:right;top:267.66px;font-size:9.5px;font-weight:bold;color:#222;letter-spacing:-0.1px">143</div>
<div class="t" style="left:823.00px;width:200px;text-align:right;top:267.66px;font-size:9.5px;font-weight:bold;color:#222;letter-spacing:-0.1px">128</div>
<div class="t" style="left:868.00px;width:200px;text-align:right;top:267.66px;font-size:9.5px;font-weight:bold;color:#222;letter-spacing:-0.1px">0</div>
<div class="t" style="left:1083px;top:267.66px;font-size:9.5px;font-weight:bold;color:#222;letter-spacing:-0.1px">Auto</div>
<div class="a" style="left:897px;top:280px;width:223px;height:16px;background:#d33a2e"></div>
<div class="a" style="left:941px;top:280px;width:1.2px;height:16px;background:rgba(255,255,255,0.55)"></div>
<div class="a" style="left:986px;top:280px;width:1.2px;height:16px;background:rgba(255,255,255,0.55)"></div>
<div class="a" style="left:1031px;top:280px;width:1.2px;height:16px;background:rgba(255,255,255,0.55)"></div>
<div class="a" style="left:1076px;top:280px;width:1.2px;height:16px;background:rgba(255,255,255,0.55)"></div>
<div class="t" style="left:904px;top:283.56px;font-size:9.5px;font-weight:bold;color:#fff;letter-spacing:-0.1px">Tank 3</div>
<div class="t" style="left:778.40px;width:200px;text-align:right;top:283.56px;font-size:9.5px;font-weight:bold;color:#fff;letter-spacing:-0.1px">212</div>
<div class="t" style="left:823.00px;width:200px;text-align:right;top:283.56px;font-size:9.5px;font-weight:bold;color:#fff;letter-spacing:-0.1px">146.5</div>
<div class="t" style="left:868.00px;width:200px;text-align:right;top:283.56px;font-size:9.5px;font-weight:bold;color:#fff;letter-spacing:-0.1px">3</div>
<div class="t" style="left:1083px;top:283.56px;font-size:9.5px;font-weight:bold;color:#fff;letter-spacing:-0.1px">Auto</div>
<div class="a" style="left:877px;top:415.8px;width:222px;height:15.5px;background:linear-gradient(90deg,#f0f0f0,#f6f6f6 70%,#f8f8f8)"></div>
<div class="t" style="left:877.7px;top:420.36px;font-size:9.3px;font-weight:bold;color:#a6a6a6;letter-spacing:0px">Information</div>
<div class="a" style="left:876.8px;top:431.6px;width:233.9px;height:234.2px;background:#fff;border:1px solid #c8ccd0"></div>
<div class="a" style="left:877.8px;top:432.6px;width:223px;height:9.5px;background:linear-gradient(#fcfdfe,#eef1f4);border-bottom:1px solid #d8dde2"></div>
<div class="t" style="left:809.00px;width:200px;text-align:center;top:433.02px;font-size:8.8px;font-weight:bold;color:#222;letter-spacing:-0.1px">Note</div>
<div class="t" style="left:884.00px;width:200px;text-align:center;top:433.02px;font-size:8.8px;font-weight:bold;color:#222;letter-spacing:-0.1px">Value</div>
<div class="t" style="left:959.40px;width:200px;text-align:center;top:433.02px;font-size:8.8px;font-weight:bold;color:#222;letter-spacing:-0.1px">Status</div>
<div class="t" style="left:881.8px;top:445.22px;font-size:9px;color:#333;letter-spacing:-0.55px">Test Row 15</div>
<div class="t" style="left:889.50px;width:200px;text-align:center;top:445.22px;font-size:9px;color:#333;letter-spacing:-0.4px">5.82</div>
<div class="t" style="left:963.00px;width:200px;text-align:center;top:445.22px;font-size:9px;color:#333;letter-spacing:-0.3px">ok</div>
<div class="t" style="left:881.8px;top:460.22px;font-size:9px;color:#333;letter-spacing:-0.55px">Test Row 6</div>
<div class="t" style="left:889.50px;width:200px;text-align:center;top:460.22px;font-size:9px;color:#333;letter-spacing:-0.4px">2.6</div>
<div class="t" style="left:963.00px;width:200px;text-align:center;top:460.22px;font-size:9px;color:#333;letter-spacing:-0.3px">ok</div>
<div class="t" style="left:881.8px;top:475.22px;font-size:9px;color:#333;letter-spacing:-0.55px">Test Row 10</div>
<div class="t" style="left:889.50px;width:200px;text-align:center;top:475.22px;font-size:9px;color:#333;letter-spacing:-0.4px">78.52</div>
<div class="t" style="left:963.00px;width:200px;text-align:center;top:475.22px;font-size:9px;color:#333;letter-spacing:-0.3px">ok</div>
<div class="t" style="left:881.8px;top:490.22px;font-size:9px;color:#333;letter-spacing:-0.55px">Test Row 2</div>
<div class="t" style="left:889.50px;width:200px;text-align:center;top:490.22px;font-size:9px;color:#333;letter-spacing:-0.4px">49.34</div>
<div class="t" style="left:963.00px;width:200px;text-align:center;top:490.22px;font-size:9px;color:#333;letter-spacing:-0.3px">ok</div>
<div class="t" style="left:881.8px;top:505.22px;font-size:9px;color:#333;letter-spacing:-0.55px">Test Row 5</div>
<div class="t" style="left:889.50px;width:200px;text-align:center;top:505.22px;font-size:9px;color:#333;letter-spacing:-0.4px">79.35</div>
<div class="t" style="left:963.00px;width:200px;text-align:center;top:505.22px;font-size:9px;color:#333;letter-spacing:-0.3px">ok</div>
<div class="t" style="left:881.8px;top:520.22px;font-size:9px;color:#333;letter-spacing:-0.55px">Test Row 6</div>
<div class="t" style="left:889.50px;width:200px;text-align:center;top:520.22px;font-size:9px;color:#333;letter-spacing:-0.4px">92.59</div>
<div class="t" style="left:963.00px;width:200px;text-align:center;top:520.22px;font-size:9px;color:#333;letter-spacing:-0.3px">ok</div>
<div class="t" style="left:881.8px;top:535.22px;font-size:9px;color:#333;letter-spacing:-0.55px">Test Row 8</div>
<div class="t" style="left:889.50px;width:200px;text-align:center;top:535.22px;font-size:9px;color:#333;letter-spacing:-0.4px">74.57</div>
<div class="t" style="left:963.00px;width:200px;text-align:center;top:535.22px;font-size:9px;color:#333;letter-spacing:-0.3px">ok</div>
<div class="t" style="left:881.8px;top:550.22px;font-size:9px;color:#333;letter-spacing:-0.55px">Test Row 9</div>
<div class="t" style="left:889.50px;width:200px;text-align:center;top:550.22px;font-size:9px;color:#333;letter-spacing:-0.4px">18.12</div>
<div class="t" style="left:963.00px;width:200px;text-align:center;top:550.22px;font-size:9px;color:#333;letter-spacing:-0.3px">ok</div>
<div class="t" style="left:881.8px;top:565.22px;font-size:9px;color:#333;letter-spacing:-0.55px">Test Row 4</div>
<div class="t" style="left:889.50px;width:200px;text-align:center;top:565.22px;font-size:9px;color:#333;letter-spacing:-0.4px">39.97</div>
<div class="t" style="left:963.00px;width:200px;text-align:center;top:565.22px;font-size:9px;color:#333;letter-spacing:-0.3px">ok</div>
<div class="t" style="left:881.8px;top:580.22px;font-size:9px;color:#333;letter-spacing:-0.55px">Test Row 17</div>
<div class="t" style="left:889.50px;width:200px;text-align:center;top:580.22px;font-size:9px;color:#333;letter-spacing:-0.4px">43.81</div>
<div class="t" style="left:963.00px;width:200px;text-align:center;top:580.22px;font-size:9px;color:#333;letter-spacing:-0.3px">ok</div>
<div class="t" style="left:881.8px;top:595.22px;font-size:9px;color:#333;letter-spacing:-0.55px">Test Row 6</div>
<div class="t" style="left:889.50px;width:200px;text-align:center;top:595.22px;font-size:9px;color:#333;letter-spacing:-0.4px">76.3</div>
<div class="t" style="left:963.00px;width:200px;text-align:center;top:595.22px;font-size:9px;color:#333;letter-spacing:-0.3px">ok</div>
<div class="t" style="left:881.8px;top:610.22px;font-size:9px;color:#333;letter-spacing:-0.55px">Test Row 5</div>
<div class="t" style="left:889.50px;width:200px;text-align:center;top:610.22px;font-size:9px;color:#333;letter-spacing:-0.4px">40.73</div>
<div class="t" style="left:963.00px;width:200px;text-align:center;top:610.22px;font-size:9px;color:#333;letter-spacing:-0.3px">ok</div>
<div class="t" style="left:881.8px;top:625.22px;font-size:9px;color:#333;letter-spacing:-0.55px">Test Row 7</div>
<div class="t" style="left:889.50px;width:200px;text-align:center;top:625.22px;font-size:9px;color:#333;letter-spacing:-0.4px">34.19</div>
<div class="t" style="left:963.00px;width:200px;text-align:center;top:625.22px;font-size:9px;color:#333;letter-spacing:-0.3px">ok</div>
<div class="t" style="left:881.8px;top:640.22px;font-size:9px;color:#333;letter-spacing:-0.55px">Test Row 12</div>
<div class="t" style="left:889.50px;width:200px;text-align:center;top:640.22px;font-size:9px;color:#333;letter-spacing:-0.4px">26.2</div>
<div class="t" style="left:963.00px;width:200px;text-align:center;top:640.22px;font-size:9px;color:#333;letter-spacing:-0.3px">ok</div>
<div class="t" style="left:881.8px;top:655.22px;font-size:9px;color:#333;letter-spacing:-0.55px">Test Row 1</div>
<div class="t" style="left:889.50px;width:200px;text-align:center;top:655.22px;font-size:9px;color:#333;letter-spacing:-0.4px">24.05</div>
<div class="t" style="left:963.00px;width:200px;text-align:center;top:655.22px;font-size:9px;color:#333;letter-spacing:-0.3px">ok</div>
<div class="a" style="left:1101.5px;top:442px;width:9px;height:223px;background:#fff;border-left:1px solid #eee"></div>
<svg style="left:1103px;top:445px" width="7" height="5" viewBox="0 0 7 5"><path d="M0.5 4 L3.5 1 L6.5 4" fill="none" stroke="#555"/></svg>
<div class="a" style="left:1102.5px;top:452.4px;width:6.5px;height:28px;background:#c5cacf"></div>
<svg style="left:1103px;top:657px" width="7" height="5" viewBox="0 0 7 5"><path d="M0.5 1 L3.5 4 L6.5 1" fill="none" stroke="#555"/></svg>
<div class="a" style="left:1205px;top:70px;width:160.5px;height:14px;background:#dce0e3;border-top:1px solid #cfd3d6"></div>
<div class="t" style="left:1208px;top:72.62px;font-size:9px;letter-spacing:-0.55px;color:#333">Component Palette</div>
<svg style="left:1327.5px;top:73px" width="8" height="8" viewBox="0 0 8 8"><rect x="0.5" y="2.5" width="5" height="5" fill="none" stroke="#5f6973" stroke-width="0.9"/><path d="M2.5 2.5 V0.5 H7.5 V5.5 H5.5" fill="none" stroke="#5f6973" stroke-width="0.9"/></svg>
<div class="a" style="left:1342.5px;top:80px;width:6px;height:1.3px;background:#5f6973"></div>
<svg style="left:1353.5px;top:73px" width="8" height="8" viewBox="0 0 8 8"><path d="M0.5 0.5 L7.5 7.5 M7.5 0.5 L0.5 7.5" stroke="#5f6973" stroke-width="1"/></svg>
<div class="a" style="left:1205px;top:84px;width:160.5px;height:653px;background:#f8f8f8;border-left:1px solid #d6d9dc;border-right:1px solid #d6d9dc"></div>
<svg style="left:1209.5px;top:89px" width="13" height="12" viewBox="0 0 13 12"><path d="M1 6 C1 2 3.5 0.5 6.5 0.5 C9.5 0.5 12 2 12 6 Z" fill="#4d5d6c"/><path d="M0.5 7 H12.5 V8 L9 11.5 H4 L0.5 8 Z" fill="#4d5d6c"/><path d="M3 9 H10" stroke="#f5f5f5" stroke-width="1"/></svg>
<div class="a" style="left:1228.4px;top:88px;width:1px;height:15px;background:#d4d4d4"></div>
<svg style="left:1235px;top:88px" width="13" height="14" viewBox="0 0 13 14"><rect x="0.5" y="4.5" width="5" height="4" fill="#ddd" stroke="#555"/><path d="M2 6.5 H4 M3 5.5 V7.5" stroke="#333" stroke-width="0.7"/><path d="M5.5 6.5 H8" stroke="#777"/><path d="M10 1 V13" stroke="#1a2a9a" stroke-dasharray="1 1"/><path d="M8 3.5 L10 0.5 L12 3.5 Z M8 10.5 L10 13.5 L12 10.5 Z" fill="#1a2a9a"/></svg>
<svg style="left:1255px;top:88px" width="13" height="14" viewBox="0 0 13 14"><rect x="0.5" y="3.5" width="5" height="4" fill="#ddd" stroke="#555"/><path d="M2.5 7.5 V11.5 H6" fill="none" stroke="#555"/><path d="M10 1 V13" stroke="#1a2a9a" stroke-dasharray="1 1"/><path d="M8 1 L10 4 L12 1 Z M8 13 L10 10 L12 13 Z" fill="#1a2a9a"/></svg>
<div class="a" style="left:1273.6px;top:88px;width:1px;height:15px;background:#d4d4d4"></div>
<div class="a" style="left:1277px;top:86.2px;width:87px;height:19px;background:#fff;border:1px solid #dcdcdc;border-radius:2px"></div>
<svg style="left:1282px;top:91px" width="12" height="10" viewBox="0 0 12 10"><circle cx="4" cy="4" r="3" fill="none" stroke="#777" stroke-width="1.2"/><path d="M6 6 L8.5 8.5" stroke="#777" stroke-width="1.4"/><path d="M9 4 H12 L10.5 5.5 Z" fill="#777"/></svg>
<div class="t" style="left:1297px;top:90.03px;font-size:8.6px;color:#a8b0b8;letter-spacing:-0.3px">Filter</div>
<div class="a" style="left:1206px;top:107px;width:158.5px;height:628px;background:#f7f7f7;border-top:1px solid #dcdcdc"></div>
<div class="a" style="left:1207.5px;top:108px;width:1px;height:627px;background:#e4e4e4"></div>
<div class="a" style="left:1215.5px;top:107px;width:130.5px;height:104px;background:#f9f9f9;border:1px solid #d4d4d4;border-top:none"></div>
<div class="a" style="left:1215.5px;top:219.3px;width:130.5px;height:14.2px;background:#dfe3e6"></div>
<div class="a" style="left:1215.5px;top:233.5px;width:130.5px;height:187px;background:#f9f9f9;border:1px solid #d4d4d4;border-top:none"></div>
<div class="a" style="left:1215.5px;top:428.6px;width:130.5px;height:15px;background:#dfe3e6"></div>
<div class="a" style="left:1215.5px;top:443.6px;width:130.5px;height:292px;background:#f9f9f9;border-left:1px solid #d4d4d4;border-right:1px solid #d4d4d4"></div>
<div class="a" style="left:1219.5px;top:223.20000000000002px;width:6.5px;height:6.5px;background:#fff;border:1px solid #8a8a8a"></div>
<div class="a" style="left:1221px;top:226.4px;width:3.5px;height:1px;background:#444"></div>
<div class="t" style="left:1230.5px;top:222.02px;font-size:9px;color:#333;letter-spacing:-0.4px">Buttons</div>
<div class="a" style="left:1219.5px;top:432.90000000000003px;width:6.5px;height:6.5px;background:#fff;border:1px solid #8a8a8a"></div>
<div class="a" style="left:1221px;top:436.1px;width:3.5px;height:1px;background:#444"></div>
<div class="t" style="left:1230.5px;top:431.72px;font-size:9px;color:#333;letter-spacing:-0.4px">Display</div>
<svg style="left:1235px;top:112.5px" width="11" height="10" viewBox="0 0 11 10"><rect x="0.5" y="2.5" width="10" height="5" fill="#fff" stroke="#444"/><path d="M2 5 H3 M4.5 5 H5.5 M7 5 H8" stroke="#222" stroke-width="1.4"/></svg>
<div class="t" style="left:1249px;top:113.22px;font-size:9px;font-weight:bold;color:#5f6a74;letter-spacing:-0.25px">Password Field</div>
<svg style="left:1235px;top:133.2px" width="11" height="10" viewBox="0 0 11 10"><rect x="0.5" y="0.5" width="10" height="9" fill="#fff" stroke="#444"/><path d="M2.5 3 V6 M1.5 4.5 H5" stroke="#222"/></svg>
<div class="t" style="left:1249px;top:133.92px;font-size:9px;font-weight:bold;color:#5f6a74;letter-spacing:-0.25px">Text Area</div>
<svg style="left:1235px;top:154px" width="11" height="10" viewBox="0 0 11 10"><rect x="0.5" y="2.5" width="10" height="5" fill="#fff" stroke="#444"/><path d="M7 4 H9.5 L8.2 6 Z" fill="#222"/></svg>
<div class="t" style="left:1249px;top:154.72px;font-size:9px;font-weight:bold;color:#5f6a74;letter-spacing:-0.25px">Dropdown List</div>
<svg style="left:1235px;top:174.7px" width="11" height="10" viewBox="0 0 11 10"><path d="M0 5 H11" stroke="#555" stroke-width="1.5"/><rect x="3.5" y="2" width="4" height="6" fill="#3a4aa0"/></svg>
<div class="t" style="left:1249px;top:175.42px;font-size:9px;font-weight:bold;color:#5f6a74;letter-spacing:-0.25px">Slider</div>
<svg style="left:1235px;top:195.4px" width="11" height="10" viewBox="0 0 11 10"><circle cx="5.5" cy="5" r="5" fill="#555"/><path d="M0.5 5 H10.5 M5.5 0 V10 M1.5 2.5 H9.5 M1.5 7.5 H9.5" stroke="#ddd" stroke-width="0.6"/><ellipse cx="5.5" cy="5" rx="2.3" ry="5" fill="none" stroke="#ddd" stroke-width="0.6"/></svg>
<div class="t" style="left:1249px;top:196.12px;font-size:9px;font-weight:bold;color:#5f6a74;letter-spacing:-0.25px">Language Selector</div>
<svg style="left:1235px;top:238.8px" width="11" height="10" viewBox="0 0 11 10"><rect x="0.5" y="1.5" width="10" height="7" rx="1.5" fill="#eee" stroke="#888"/><path d="M3 5 H8" stroke="#777"/></svg>
<div class="t" style="left:1249px;top:239.52px;font-size:9px;font-weight:bold;color:#5f6a74;letter-spacing:-0.25px">Button</div>
<svg style="left:1235px;top:259.8px" width="11" height="10" viewBox="0 0 11 10"><rect x="0.5" y="1" width="10" height="8" fill="#2a2"/><path d="M0.5 1 H10.5 L0.5 9 Z" fill="#e22"/></svg>
<div class="t" style="left:1249px;top:260.52px;font-size:9px;font-weight:bold;color:#5f6a74;letter-spacing:-0.25px">2-State Toggle</div>
<svg style="left:1235px;top:280.5px" width="11" height="10" viewBox="0 0 11 10"><rect x="3" y="2.5" width="5" height="5" fill="#e44"/><path d="M0 5 H2 M9 5 H11" stroke="#e44" stroke-width="1.2"/></svg>
<div class="t" style="left:1249px;top:281.22px;font-size:9px;font-weight:bold;color:#5f6a74;letter-spacing:-0.25px">Multi-State Button</div>
<svg style="left:1235px;top:301.3px" width="11" height="10" viewBox="0 0 11 10"><rect x="0.5" y="1.5" width="10" height="7" fill="#f4f0e8" stroke="#999"/><path d="M3 3 L7 7" stroke="#e87020" stroke-width="2"/></svg>
<div class="t" style="left:1249px;top:302.02px;font-size:9px;font-weight:bold;color:#5f6a74;letter-spacing:-0.25px">One-Shot Button</div>
<svg style="left:1235px;top:322px" width="11" height="10" viewBox="0 0 11 10"><rect x="0.5" y="1.5" width="10" height="7" fill="#f4f0e8" stroke="#999"/><path d="M5 3 V7" stroke="#e87020" stroke-width="1.5"/></svg>
<div class="t" style="left:1249px;top:322.72px;font-size:9px;font-weight:bold;color:#5f6a74;letter-spacing:-0.25px">Momentary Button</div>
<svg style="left:1235px;top:342.7px" width="11" height="10" viewBox="0 0 11 10"><rect x="0.5" y="1.5" width="10" height="7" rx="1" fill="#bbb" stroke="#777"/><path d="M3 5 H8" stroke="#555"/></svg>
<div class="t" style="left:1249px;top:343.42px;font-size:9px;font-weight:bold;color:#5f6a74;letter-spacing:-0.25px">Toggle Button</div>
<svg style="left:1235px;top:363.5px" width="11" height="10" viewBox="0 0 11 10"><rect x="0.5" y="2.5" width="4" height="4" fill="none" stroke="#555"/><path d="M6 5 H11" stroke="#333" stroke-width="1.3"/></svg>
<div class="t" style="left:1249px;top:364.22px;font-size:9px;font-weight:bold;color:#5f6a74;letter-spacing:-0.25px">Check Box</div>
<svg style="left:1235px;top:384.2px" width="11" height="10" viewBox="0 0 11 10"><circle cx="2.7" cy="5" r="2" fill="none" stroke="#555"/><path d="M6 5 H11" stroke="#333" stroke-width="1.3"/></svg>
<div class="t" style="left:1249px;top:384.92px;font-size:9px;font-weight:bold;color:#5f6a74;letter-spacing:-0.25px">Radio Button</div>
<svg style="left:1235px;top:405px" width="11" height="10" viewBox="0 0 11 10"><path d="M0.5 7 H11" stroke="#777"/><rect x="0.5" y="3.5" width="5" height="3.5" fill="#f0c040"/><rect x="6" y="4.5" width="4" height="2.5" fill="#ccc"/></svg>
<div class="t" style="left:1249px;top:405.72px;font-size:9px;font-weight:bold;color:#5f6a74;letter-spacing:-0.25px">Tab Strip</div>
<svg style="left:1235px;top:448.6px" width="11" height="10" viewBox="0 0 11 10"><path d="M0.5 3 V7 M10.5 3 V7 M0.5 5 H10.5" stroke="#4848a0" stroke-dasharray="1.2 0.8"/></svg>
<div class="t" style="left:1249px;top:449.32px;font-size:9px;font-weight:bold;color:#5f6a74;letter-spacing:-0.25px">Label</div>
<svg style="left:1235px;top:469.4px" width="11" height="10" viewBox="0 0 11 10"><rect x="0.5" y="2.5" width="10" height="5" fill="#ddd" stroke="#777"/><path d="M6 4 H9 M6 6 H9" stroke="#222"/></svg>
<div class="t" style="left:1249px;top:470.12px;font-size:9px;font-weight:bold;color:#5f6a74;letter-spacing:-0.25px">Numeric Label</div>
<svg style="left:1235px;top:490.2px" width="11" height="10" viewBox="0 0 11 10"><rect x="0.5" y="1.5" width="10" height="7" fill="#22bb22" stroke="#117711"/><path d="M2 5 H9" stroke="#ccffcc" stroke-width="0.7"/></svg>
<div class="t" style="left:1249px;top:490.92px;font-size:9px;font-weight:bold;color:#5f6a74;letter-spacing:-0.25px">Multi-State Indicator</div>
<svg style="left:1235px;top:511px" width="11" height="10" viewBox="0 0 11 10"><rect x="0.5" y="1.5" width="10" height="7" fill="#224422" stroke="#113311"/><path d="M2 5 H9" stroke="#44dd44" stroke-width="1"/></svg>
<div class="t" style="left:1249px;top:511.72px;font-size:9px;font-weight:bold;color:#5f6a74;letter-spacing:-0.25px">LED Display</div>
<svg style="left:1235px;top:531.7px" width="11" height="10" viewBox="0 0 11 10"><path d="M6.5 0.5 V9.5" stroke="#444" stroke-width="1.3"/><path d="M1 5 L4 3 V7 Z" fill="#222"/></svg>
<div class="t" style="left:1249px;top:532.42px;font-size:9px;font-weight:bold;color:#5f6a74;letter-spacing:-0.25px">Moving Analog Indicat...</div>
<svg style="left:1235px;top:552.5px" width="11" height="10" viewBox="0 0 11 10"><rect x="0.5" y="1.5" width="10" height="7" fill="#cfe0f0" stroke="#7788aa"/><path d="M2 7 L5 4 L8 7 Z" fill="#d84"/></svg>
<div class="t" style="left:1249px;top:553.22px;font-size:9px;font-weight:bold;color:#5f6a74;letter-spacing:-0.25px">Image</div>
<svg style="left:1235px;top:573.2px" width="11" height="10" viewBox="0 0 11 10"><rect x="0.5" y="3.5" width="10" height="3" fill="#6a6aa0" stroke="#444"/></svg>
<div class="t" style="left:1249px;top:573.92px;font-size:9px;font-weight:bold;color:#5f6a74;letter-spacing:-0.25px">Progress Bar</div>
<svg style="left:1235px;top:594px" width="11" height="10" viewBox="0 0 11 10"><rect x="1" y="0" width="9.5" height="10" fill="#22cc22" stroke="#118811"/></svg>
<div class="t" style="left:1249px;top:594.72px;font-size:9px;font-weight:bold;color:#5f6a74;letter-spacing:-0.25px">Cylindrical Tank</div>
<svg style="left:1235px;top:614.7px" width="11" height="10" viewBox="0 0 11 10"><rect x="1" y="0.5" width="9" height="9" fill="#dde" /><rect x="1" y="5" width="9" height="4.5" fill="#2233bb"/></svg>
<div class="t" style="left:1249px;top:615.42px;font-size:9px;font-weight:bold;color:#5f6a74;letter-spacing:-0.25px">Level Indicator</div>
<svg style="left:1235px;top:635.5px" width="11" height="10" viewBox="0 0 11 10"><path d="M3 0 V10 M3 1 H6 M3 5 H6 M3 9 H6" stroke="#555"/></svg>
<div class="t" style="left:1249px;top:636.22px;font-size:9px;font-weight:bold;color:#5f6a74;letter-spacing:-0.25px">Linear Scale</div>
<svg style="left:1235px;top:656.2px" width="11" height="10" viewBox="0 0 11 10"><rect x="0.5" y="0.5" width="10" height="9" fill="#fff" stroke="#444"/><path d="M2.5 2 V8 M4.5 2 V8 M6.5 2 V8 M8.5 2 V8" stroke="#222"/></svg>
<div class="t" style="left:1249px;top:656.92px;font-size:9px;font-weight:bold;color:#5f6a74;letter-spacing:-0.25px">Barcode</div>
<svg style="left:1235px;top:677px" width="11" height="10" viewBox="0 0 11 10"><path d="M0.5 8 A5 5 0 0 1 10.5 8 Z" fill="#fff" stroke="#444"/><path d="M5.5 8 L8 4" stroke="#c22"/></svg>
<div class="t" style="left:1249px;top:677.72px;font-size:9px;font-weight:bold;color:#5f6a74;letter-spacing:-0.25px">Meter</div>
<svg style="left:1235px;top:697.7px" width="11" height="10" viewBox="0 0 11 10"><ellipse cx="5.5" cy="5" rx="5" ry="3.5" fill="#b8b8e8" stroke="#6666aa"/><path d="M3 4 L8 6" stroke="#c33" stroke-width="1.3"/></svg>
<div class="t" style="left:1249px;top:698.42px;font-size:9px;font-weight:bold;color:#5f6a74;letter-spacing:-0.25px">Compass</div>
<svg style="left:1235px;top:718.4px" width="11" height="10" viewBox="0 0 11 10"><rect x="2" y="0" width="7" height="10" fill="#aab0e0"/><path d="M5.5 2 V8" stroke="#d22" stroke-width="1.5"/></svg>
<div class="t" style="left:1249px;top:719.12px;font-size:9px;font-weight:bold;color:#5f6a74;letter-spacing:-0.25px">Thermometer</div>
<div class="a" style="left:1355.5px;top:108px;width:8px;height:627px;background:#f4f4f4"></div>
<svg style="left:1356px;top:110.5px" width="7" height="5" viewBox="0 0 7 5"><path d="M0.5 4 L3.5 1 L6.5 4" fill="none" stroke="#555"/></svg>
<div class="a" style="left:1355.8px;top:152.5px;width:7.5px;height:205px;background:#c4c9cd"></div>
<svg style="left:1356px;top:726px" width="7" height="5" viewBox="0 0 7 5"><path d="M0.5 1 L3.5 4 L6.5 1" fill="none" stroke="#555"/></svg>
<div class="a" style="left:1366px;top:70px;width:20px;height:667px;background:#f6f6f6"></div>
<div class="a" style="left:1368px;top:70px;width:16px;height:5px;background:repeating-linear-gradient(90deg,#d8d8d8 0 1px,#eee 1px 2px)"></div>
<div class="a" style="left:1366.5px;top:77.4px;width:19px;height:19px;background:#dfe5ea;border:1px solid #c9d1d8"></div>
<svg style="left:1371.5px;top:82px" width="9" height="9" viewBox="0 0 9 9"><path d="M0.5 0.5 L8.5 3.5 L5 5 L3.5 8.5 Z" fill="#3d4a56"/></svg>
<svg style="left:1370.5px;top:106.1px" width="11" height="11" viewBox="0 0 11 11"><path d="M1.5 1.5 H9.5 V7 L6 7 L5 9.5 L4 7 H1.5 Z" fill="none" stroke="#4d5d6c"/></svg>
<svg style="left:1370.5px;top:126.0px" width="11" height="11" viewBox="0 0 11 11"><circle cx="5.5" cy="4.5" r="4" fill="none" stroke="#4d5d6c"/><path d="M5.5 8.5 V10.5" stroke="#4d5d6c"/></svg>
<svg style="left:1370.5px;top:146.1px" width="11" height="11" viewBox="0 0 11 11"><path d="M5.5 0.5 L9.5 8.5 H1.5 Z" fill="none" stroke="#4d5d6c"/><path d="M5.5 8.5 V10.5" stroke="#4d5d6c"/></svg>
<svg style="left:1370.5px;top:165.3px" width="11" height="11" viewBox="0 0 11 11"><path d="M0.5 4 H5.5 V1.5 L10 5.5 L5.5 9.5 V7 H0.5 Z" fill="none" stroke="#4d5d6c"/></svg>
<svg style="left:1370.5px;top:185.5px" width="11" height="11" viewBox="0 0 11 11"><path d="M1 10 L2 7 L8 1 L10 3 L4 9 Z" fill="none" stroke="#4d5d6c"/></svg>
<svg style="left:1370.5px;top:205.3px" width="11" height="11" viewBox="0 0 11 11"><path d="M1 10 L2 6 L6 2 L9 5 L5 9 Z" fill="#4d5d6c"/><path d="M7 1 L10 4" stroke="#4d5d6c" stroke-width="1.5"/></svg>
<svg style="left:1370.5px;top:228.5px" width="11" height="11" viewBox="0 0 11 11"><circle cx="2" cy="9" r="1.5" fill="none" stroke="#4d5d6c"/><circle cx="9" cy="2" r="1.5" fill="none" stroke="#4d5d6c"/><path d="M3 8 L8 3" stroke="#4d5d6c"/></svg>
<svg style="left:1370.5px;top:249.0px" width="11" height="11" viewBox="0 0 11 11"><rect x="0.5" y="0.5" width="10" height="9" fill="#fff" stroke="#4d5d6c"/><path d="M1 7 L3 5 L5 7 L7 5 L10 8 V9.5 H1 Z" fill="#4d5d6c"/></svg>
<svg style="left:1370.5px;top:268.8px" width="11" height="11" viewBox="0 0 11 11"><path d="M1 10 L6 5 M5 3 L8 6 M7 1.5 L9.5 4 L10 1 Z" stroke="#4d5d6c" stroke-width="1.2" fill="#4d5d6c"/></svg>
<div class="a" style="left:1367px;top:222px;width:18px;height:1px;background:#d0d0d0"></div>
<div class="a" style="left:1192.2px;top:352.0px;width:4px;height:1px;background:#eef0f2"></div>
<div class="a" style="left:1192.2px;top:354.6px;width:4px;height:1px;background:#eef0f2"></div>
<div class="a" style="left:1192.2px;top:357.2px;width:4px;height:1px;background:#eef0f2"></div>
<div class="a" style="left:1192.2px;top:359.8px;width:4px;height:1px;background:#eef0f2"></div>
<div class="a" style="left:1192.2px;top:362.4px;width:4px;height:1px;background:#eef0f2"></div>
<div class="a" style="left:253.8px;top:137.0px;width:4px;height:1px;background:#eef0f2"></div>
<div class="a" style="left:253.8px;top:139.6px;width:4px;height:1px;background:#eef0f2"></div>
<div class="a" style="left:253.8px;top:142.2px;width:4px;height:1px;background:#eef0f2"></div>
<div class="a" style="left:253.8px;top:144.8px;width:4px;height:1px;background:#eef0f2"></div>
<div class="a" style="left:254.2px;top:603.0px;width:4px;height:1px;background:#eef0f2"></div>
<div class="a" style="left:254.2px;top:605.6px;width:4px;height:1px;background:#eef0f2"></div>
<div class="a" style="left:254.2px;top:608.2px;width:4px;height:1px;background:#eef0f2"></div>
<div class="a" style="left:254.2px;top:610.8px;width:4px;height:1px;background:#eef0f2"></div>
<div class="a" style="left:1357.6px;top:250.0px;width:4px;height:1px;background:#eef0f2"></div>
<div class="a" style="left:1357.6px;top:252.6px;width:4px;height:1px;background:#eef0f2"></div>
<div class="a" style="left:1357.6px;top:255.2px;width:4px;height:1px;background:#eef0f2"></div>
<div class="a" style="left:1357.6px;top:257.8px;width:4px;height:1px;background:#eef0f2"></div>
<div class="a" style="left:1103.8px;top:460.0px;width:4px;height:1px;background:#eef0f2"></div>
<div class="a" style="left:1103.8px;top:462.6px;width:4px;height:1px;background:#eef0f2"></div>
<div class="a" style="left:1103.8px;top:465.2px;width:4px;height:1px;background:#eef0f2"></div>
<div class="a" style="left:1103.8px;top:467.8px;width:4px;height:1px;background:#eef0f2"></div>
<div class="a" style="left:263.5px;top:393px;width:2px;height:16px;background:repeating-linear-gradient(#cfcfcf 0 1px,transparent 1px 2.5px)"></div>
<div class="a" style="left:1201.5px;top:394px;width:2px;height:16px;background:repeating-linear-gradient(#cfcfcf 0 1px,transparent 1px 2.5px)"></div>
</body></html>
